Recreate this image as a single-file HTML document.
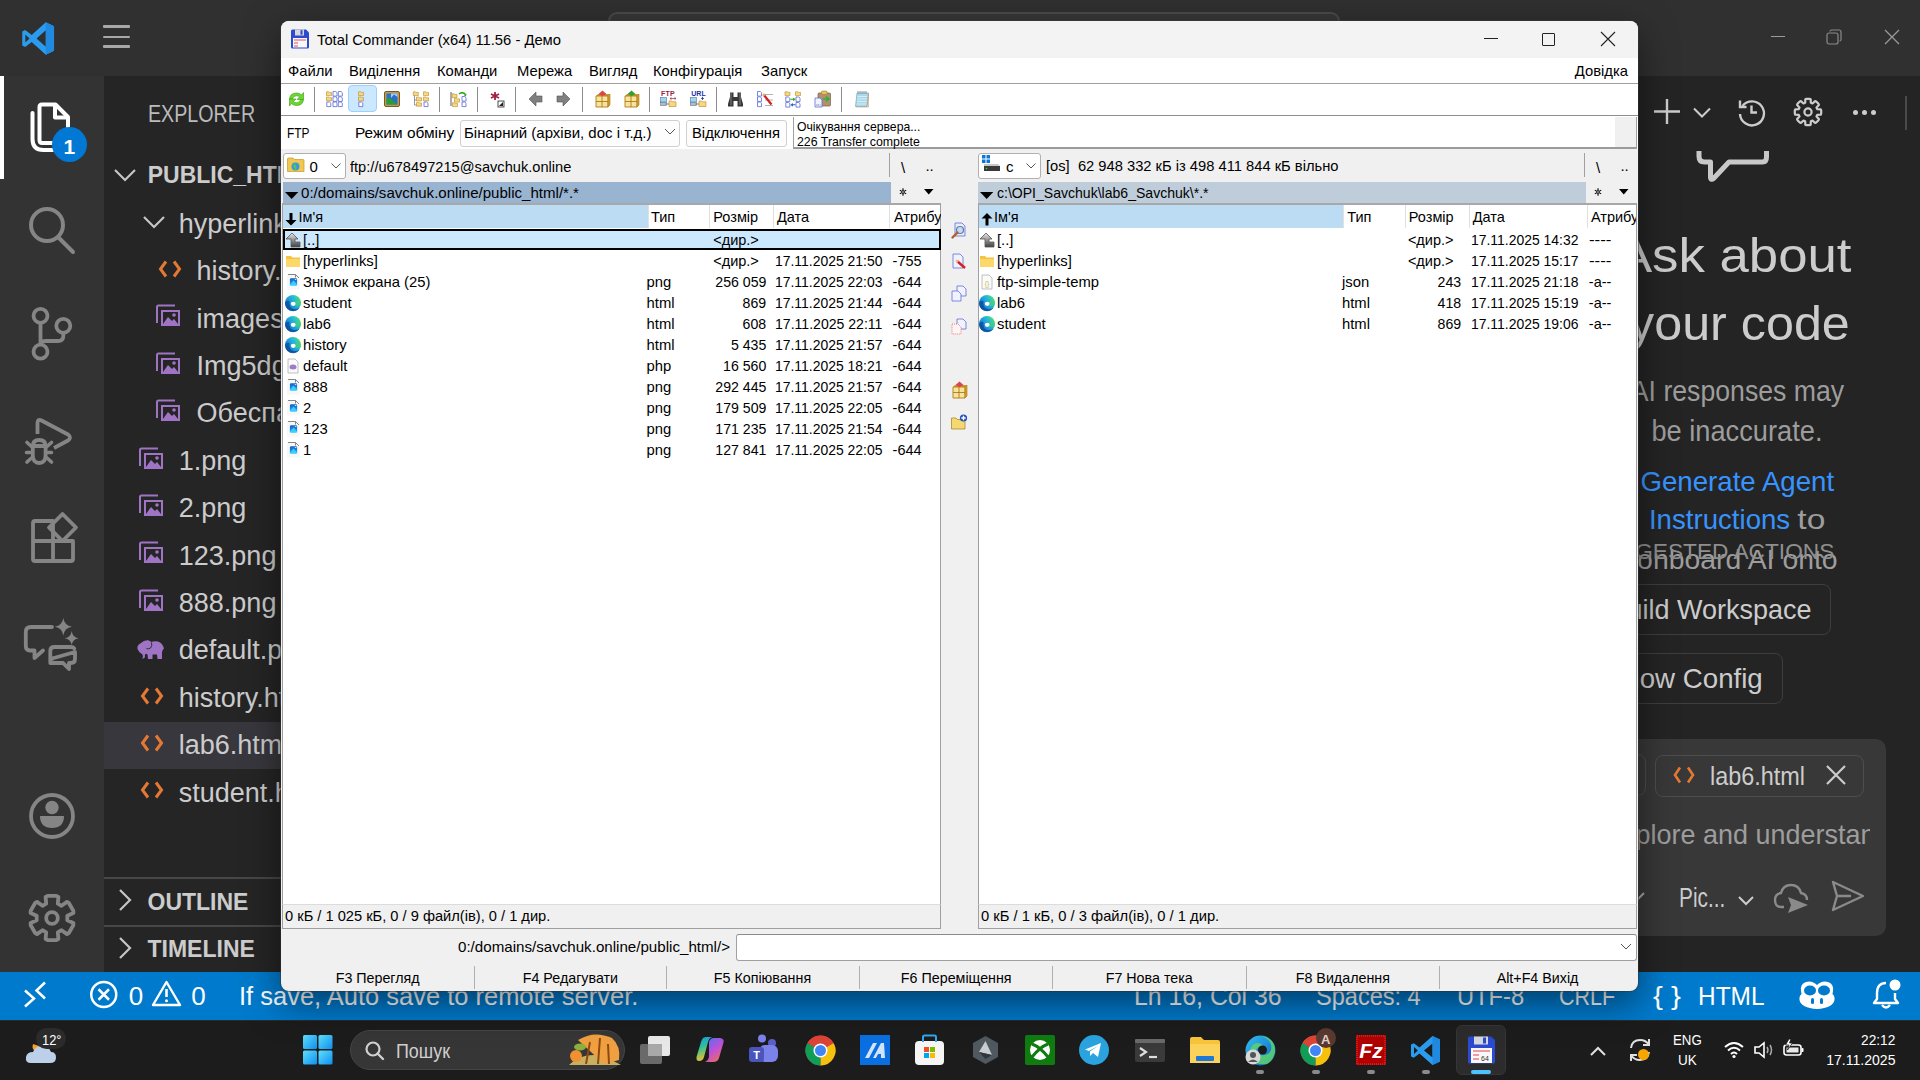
<!DOCTYPE html>
<html><head><meta charset="utf-8">
<style>
*{margin:0;padding:0;box-sizing:border-box}
html,body{width:1920px;height:1080px;overflow:hidden;background:#252526;font-family:"Liberation Sans",sans-serif}
.a{position:absolute}
.t{position:absolute;white-space:pre;line-height:1}
svg{position:absolute;overflow:visible}
</style></head><body>

<div class="a" style="left:0px;top:0px;width:1920px;height:76px;background:#303030;"></div>
<div class="a" style="left:0px;top:76px;width:104px;height:896px;background:#333333;"></div>
<div class="a" style="left:104px;top:76px;width:1536px;height:896px;background:#252526;"></div>
<div class="a" style="left:1637px;top:76px;width:283px;height:896px;background:#242424;"></div>
<svg style="left:20px;top:21px;" width="36" height="35" viewBox="0 0 35 36"><path d="M25.5 1.2 L34 5.3 V30.7 L25.5 34.8 L11 21.6 L4.3 26.7 L1.3 25.2 V10.8 L4.3 9.3 L11 14.4 Z M25.5 9.6 L16 18 L25.5 26.4 Z M4.5 13.8 V22.2 L8.8 18 Z" fill="#2a9cf0"/><path d="M25.5 1.2 L34 5.3 V30.7 L25.5 34.8 Z" fill="#1f8ae0"/></svg>
<div class="a" style="left:103px;top:25px;width:27px;height:2.6px;background:#a8a8a8;border-radius:1px"></div>
<div class="a" style="left:103px;top:35.5px;width:27px;height:2.6px;background:#a8a8a8;border-radius:1px"></div>
<div class="a" style="left:103px;top:45px;width:27px;height:2.6px;background:#a8a8a8;border-radius:1px"></div>
<div class="a" style="left:608px;top:12px;width:732px;height:40px;background:#373737;border:2px solid #4a4a4a;border-radius:9px"></div>
<div class="a" style="left:1771px;top:36px;width:14px;height:1px;background:#9a9a9a;"></div>
<svg style="left:1826px;top:29px;" width="16" height="16" viewBox="0 0 16 16"><rect x="1" y="4" width="11" height="11" rx="2" fill="none" stroke="#8a8a8a" stroke-width="1.2"/><path d="M4 2.5 Q4 1 5.5 1 H13 Q15 1 15 3 V10.5 Q15 12 13.5 12" fill="none" stroke="#8a8a8a" stroke-width="1.2"/></svg>
<svg style="left:1884px;top:29px;" width="16" height="16" viewBox="0 0 16 16"><path d="M1 1 L15 15 M15 1 L1 15" stroke="#9a9a9a" stroke-width="1.3"/></svg>
<div class="a" style="left:0px;top:76px;width:4px;height:103px;background:#ffffff;"></div>
<svg style="left:0px;top:76px;" width="104" height="100" viewBox="0 0 104 100"><path d="M39.5 31 Q39.5 28.5 42 28.5 H55.5 L68 41 V64 Q68 67 65 67 H42 Q39.5 67 39.5 64 Z" fill="none" stroke="#fff" stroke-width="4" stroke-linejoin="round"/><path d="M55 29.5 V41.5 H67" fill="none" stroke="#fff" stroke-width="4" stroke-linejoin="round"/><path d="M32.5 37 V63 Q32.5 74 43.5 74 H53" fill="none" stroke="#fff" stroke-width="4" stroke-linecap="round"/></svg>
<div class="a" style="left:52px;top:127px;width:35px;height:35px;border-radius:50%;background:#0078d4"></div>
<div class="t" style="left:63.50px;top:136.22px;font-size:21px;color:#fff;font-weight:700;">1</div>
<svg style="left:22px;top:200px;" width="60" height="60" viewBox="0 0 60 60"><circle cx="25" cy="25" r="16" fill="none" stroke="#858585" stroke-width="4"/><path d="M37 38 L51 52" stroke="#858585" stroke-width="4" stroke-linecap="round"/></svg>
<svg style="left:22px;top:300px;" width="60" height="60" viewBox="0 0 60 60"><circle cx="18.5" cy="15.8" r="7" fill="none" stroke="#858585" stroke-width="3.8"/><circle cx="41.3" cy="25.8" r="7" fill="none" stroke="#858585" stroke-width="3.8"/><circle cx="18.5" cy="51.7" r="7" fill="none" stroke="#858585" stroke-width="3.8"/><path d="M18.5 23 V44.5 M41.3 33 V36 Q41.3 41 36 41 H24 Q19 41 18.5 45" fill="none" stroke="#858585" stroke-width="3.8"/></svg>
<svg style="left:20px;top:410px;" width="60" height="60" viewBox="0 0 60 60"><path d="M17.5 24 V13 Q17.5 8.5 21.5 10.5 L48 24.5 Q52 27.5 48 30.5 L34 38" fill="none" stroke="#858585" stroke-width="3.8" stroke-linecap="butt" stroke-linejoin="round"/><path d="M12.8 36 Q12.8 30 19.2 30 Q25.6 30 25.6 36" fill="none" stroke="#858585" stroke-width="3.8"/><path d="M12.8 36 H25.6 V45 Q25.6 53 19.2 53 Q12.8 53 12.8 45 Z" fill="none" stroke="#858585" stroke-width="3.8"/><path d="M7 32.5 L11.5 36.5 M31.5 32.5 L27 36.5 M6.5 42.5 H11 M27.5 42.5 H31.5 M7 52 L11.5 48 M31.5 52 L27 48" fill="none" stroke="#858585" stroke-width="3.6" stroke-linecap="round"/></svg>
<svg style="left:22px;top:510px;" width="60" height="60" viewBox="0 0 60 60"><path d="M11 13 Q11 11 13 11 H31 V31 H51 V49 Q51 51 49 51 H13 Q11 51 11 49 Z M11 31 H31 V51" fill="none" stroke="#858585" stroke-width="3.8" stroke-linejoin="round"/><path d="M40.5 4 L54 17.5 L40.5 31 L27 17.5 Z" fill="none" stroke="#858585" stroke-width="3.8" stroke-linejoin="round"/></svg>
<svg style="left:10px;top:600px;" width="80" height="80" viewBox="0 0 80 80"><path d="M42 27 H21 Q15.8 27 15.8 32 V46 Q15.8 50 19.5 50.5 H24.5 V58 L33 50.5" fill="none" stroke="#858585" stroke-width="3.8" stroke-linejoin="round" stroke-linecap="round"/><path d="M40.3 63 V51 Q40.3 47 44.3 47 H60.5 Q63.3 47 64.3 48.5 M65 52 V59 Q65 63 61 63 H59 V69 L53 63 H44.3 Q40.3 63 40.3 59 Z" fill="none" stroke="#858585" stroke-width="3.8" stroke-linejoin="round" stroke-linecap="round"/><path d="M53.3 18 Q54.3 25.5 62 26.7 Q54.3 28 53.3 35.5 Q52.3 28 44.8 26.7 Q52.3 25.5 53.3 18 Z M61.7 31 Q62.5 37.3 68.7 38.3 Q62.5 39.3 61.7 45.5 Q60.9 39.3 54.7 38.3 Q60.9 37.3 61.7 31 Z" fill="#858585"/></svg>
<svg style="left:22px;top:786px;" width="60" height="60" viewBox="0 0 60 60"><circle cx="30" cy="30" r="21" fill="none" stroke="#858585" stroke-width="3.8"/><circle cx="30" cy="21.5" r="6.7" fill="#858585"/><path d="M18 30 H42 Q42 42 30 42 Q18 42 18 30 Z" fill="#858585"/></svg>
<svg style="left:22px;top:888px;" width="60" height="60" viewBox="0 0 60 60"><path d="M23.6 9.0 L25.7 7.9 L34.3 7.9 L36.4 9.0 L35.8 15.6 L39.5 17.8 L45.0 13.9 L47.0 15.2 L51.3 22.7 L51.4 25.1 L45.3 27.8 L45.3 32.2 L51.4 34.9 L51.3 37.3 L47.0 44.8 L45.0 46.1 L39.5 42.2 L35.8 44.4 L36.4 51.0 L34.3 52.1 L25.7 52.1 L23.6 51.0 L24.2 44.4 L20.5 42.2 L15.0 46.1 L13.0 44.8 L8.7 37.3 L8.6 34.9 L14.7 32.2 L14.7 27.8 L8.6 25.1 L8.7 22.7 L13.0 15.2 L15.0 13.9 L20.5 17.8 L24.2 15.6 Z" fill="none" stroke="#858585" stroke-width="3.8" stroke-linejoin="round"/><circle cx="30" cy="30" r="5.8" fill="none" stroke="#858585" stroke-width="3.8"/></svg>
<div class="t" style="left:148.00px;top:102.84px;font-size:23.7px;color:#bbbbbb;transform:scaleX(0.8305);transform-origin:0 50%;">EXPLORER</div>
<svg style="left:112px;top:166px;" width="28" height="18" viewBox="0 0 28 18"><path d="M3 4 L13 14 L23 4" fill="none" stroke="#c5c5c5" stroke-width="2.2"/></svg>
<div class="t" style="left:147.70px;top:164.23px;font-size:23px;color:#cccccc;font-weight:700;">PUBLIC_HTML</div>
<svg style="left:141px;top:213px;" width="28" height="18" viewBox="0 0 28 18"><path d="M3 4 L13 14 L23 4" fill="none" stroke="#c5c5c5" stroke-width="2.2"/></svg>
<div class="t" style="left:178.80px;top:210.74px;font-size:27px;color:#cccccc;">hyperlinks</div>
<div class="t" style="left:196.60px;top:258.14px;font-size:27px;color:#cccccc;">history.html</div>
<svg style="left:158px;top:259.0px;" width="24" height="20" viewBox="0 0 24 20"><path d="M8 2.5 L2.5 10 L8 17.5 M16 2.5 L21.5 10 L16 17.5" fill="none" stroke="#e37933" stroke-width="3"/></svg>
<div class="t" style="left:196.60px;top:305.54px;font-size:27px;color:#cccccc;">images.png</div>
<svg style="left:155px;top:304.4px;" width="27" height="24" viewBox="0 0 27 24"><path d="M2 19 V3 Q2 1.5 3.5 1.5 H20" fill="none" stroke="#a074c4" stroke-width="2"/><rect x="6" y="6" width="19" height="16" fill="#a074c4"/><rect x="8" y="8" width="15" height="12" fill="#252526"/><path d="M8 20 L13 13 L17 17 L19 15 L23 20 Z" fill="#a074c4"/><circle cx="19" cy="11" r="1.8" fill="#a074c4"/></svg>
<div class="t" style="left:196.60px;top:352.94px;font-size:27px;color:#cccccc;">Img5dgs.png</div>
<svg style="left:155px;top:351.79999999999995px;" width="27" height="24" viewBox="0 0 27 24"><path d="M2 19 V3 Q2 1.5 3.5 1.5 H20" fill="none" stroke="#a074c4" stroke-width="2"/><rect x="6" y="6" width="19" height="16" fill="#a074c4"/><rect x="8" y="8" width="15" height="12" fill="#252526"/><path d="M8 20 L13 13 L17 17 L19 15 L23 20 Z" fill="#a074c4"/><circle cx="19" cy="11" r="1.8" fill="#a074c4"/></svg>
<div class="t" style="left:196.60px;top:400.34px;font-size:27px;color:#cccccc;">Обеспалена.png</div>
<svg style="left:155px;top:399.2px;" width="27" height="24" viewBox="0 0 27 24"><path d="M2 19 V3 Q2 1.5 3.5 1.5 H20" fill="none" stroke="#a074c4" stroke-width="2"/><rect x="6" y="6" width="19" height="16" fill="#a074c4"/><rect x="8" y="8" width="15" height="12" fill="#252526"/><path d="M8 20 L13 13 L17 17 L19 15 L23 20 Z" fill="#a074c4"/><circle cx="19" cy="11" r="1.8" fill="#a074c4"/></svg>
<div class="t" style="left:178.80px;top:447.74px;font-size:27px;color:#cccccc;">1.png</div>
<svg style="left:138px;top:446.6px;" width="27" height="24" viewBox="0 0 27 24"><path d="M2 19 V3 Q2 1.5 3.5 1.5 H20" fill="none" stroke="#a074c4" stroke-width="2"/><rect x="6" y="6" width="19" height="16" fill="#a074c4"/><rect x="8" y="8" width="15" height="12" fill="#252526"/><path d="M8 20 L13 13 L17 17 L19 15 L23 20 Z" fill="#a074c4"/><circle cx="19" cy="11" r="1.8" fill="#a074c4"/></svg>
<div class="t" style="left:178.80px;top:495.14px;font-size:27px;color:#cccccc;">2.png</div>
<svg style="left:138px;top:494.0px;" width="27" height="24" viewBox="0 0 27 24"><path d="M2 19 V3 Q2 1.5 3.5 1.5 H20" fill="none" stroke="#a074c4" stroke-width="2"/><rect x="6" y="6" width="19" height="16" fill="#a074c4"/><rect x="8" y="8" width="15" height="12" fill="#252526"/><path d="M8 20 L13 13 L17 17 L19 15 L23 20 Z" fill="#a074c4"/><circle cx="19" cy="11" r="1.8" fill="#a074c4"/></svg>
<div class="t" style="left:178.80px;top:542.54px;font-size:27px;color:#cccccc;">123.png</div>
<svg style="left:138px;top:541.4px;" width="27" height="24" viewBox="0 0 27 24"><path d="M2 19 V3 Q2 1.5 3.5 1.5 H20" fill="none" stroke="#a074c4" stroke-width="2"/><rect x="6" y="6" width="19" height="16" fill="#a074c4"/><rect x="8" y="8" width="15" height="12" fill="#252526"/><path d="M8 20 L13 13 L17 17 L19 15 L23 20 Z" fill="#a074c4"/><circle cx="19" cy="11" r="1.8" fill="#a074c4"/></svg>
<div class="t" style="left:178.80px;top:589.94px;font-size:27px;color:#cccccc;">888.png</div>
<svg style="left:138px;top:588.8px;" width="27" height="24" viewBox="0 0 27 24"><path d="M2 19 V3 Q2 1.5 3.5 1.5 H20" fill="none" stroke="#a074c4" stroke-width="2"/><rect x="6" y="6" width="19" height="16" fill="#a074c4"/><rect x="8" y="8" width="15" height="12" fill="#252526"/><path d="M8 20 L13 13 L17 17 L19 15 L23 20 Z" fill="#a074c4"/><circle cx="19" cy="11" r="1.8" fill="#a074c4"/></svg>
<div class="t" style="left:178.80px;top:637.34px;font-size:27px;color:#cccccc;">default.php</div>
<svg style="left:137px;top:639.6999999999999px;" width="28" height="20" viewBox="0 0 28 20"><path d="M4 3 Q7 0 11 0.3 Q13.5 0.8 14 2 Q17 1 21 1.5 Q25.5 3 27 8.5 L26 9.5 Q25 11 25 13 V19 H20.5 L20 14.5 H15.5 V19 H11 L10.5 14.5 Q9 13.5 8.5 14 Q7.5 15 8 17 Q7 19 5 18.5 Q6.5 16.5 5.5 14.5 Q1.5 12 0.5 9 Q-0.3 5 4 3 Z" fill="#a074c4"/><path d="M14.5 2.5 Q15.5 6 13.5 8 Q11.5 9.5 9.5 8.5" fill="none" stroke="#252526" stroke-width="0.9"/></svg>
<div class="t" style="left:178.80px;top:684.74px;font-size:27px;color:#cccccc;">history.html</div>
<svg style="left:140px;top:685.6px;" width="24" height="20" viewBox="0 0 24 20"><path d="M8 2.5 L2.5 10 L8 17.5 M16 2.5 L21.5 10 L16 17.5" fill="none" stroke="#e37933" stroke-width="3"/></svg>
<div class="a" style="left:104px;top:722px;width:177px;height:47px;background:#37373d;"></div>
<div class="t" style="left:178.80px;top:732.14px;font-size:27px;color:#cccccc;">lab6.html</div>
<svg style="left:140px;top:733.0px;" width="24" height="20" viewBox="0 0 24 20"><path d="M8 2.5 L2.5 10 L8 17.5 M16 2.5 L21.5 10 L16 17.5" fill="none" stroke="#e37933" stroke-width="3"/></svg>
<div class="t" style="left:178.80px;top:779.54px;font-size:27px;color:#cccccc;">student.html</div>
<svg style="left:140px;top:780.4px;" width="24" height="20" viewBox="0 0 24 20"><path d="M8 2.5 L2.5 10 L8 17.5 M16 2.5 L21.5 10 L16 17.5" fill="none" stroke="#e37933" stroke-width="3"/></svg>
<div class="a" style="left:104px;top:877px;width:177px;height:2px;background:#474747;"></div>
<div class="a" style="left:104px;top:925px;width:177px;height:2px;background:#474747;"></div>
<svg style="left:116px;top:887px;" width="20" height="26" viewBox="0 0 20 26"><path d="M4 3 L14 13 L4 23" fill="none" stroke="#c5c5c5" stroke-width="2.2"/></svg>
<div class="t" style="left:147.50px;top:890.53px;font-size:23px;color:#cccccc;font-weight:700;">OUTLINE</div>
<svg style="left:116px;top:935px;" width="20" height="26" viewBox="0 0 20 26"><path d="M4 3 L14 13 L4 23" fill="none" stroke="#c5c5c5" stroke-width="2.2"/></svg>
<div class="t" style="left:147.50px;top:938.03px;font-size:23px;color:#cccccc;font-weight:700;">TIMELINE</div>
<svg style="left:1652px;top:97px;" width="30" height="30" viewBox="0 0 30 30"><path d="M15 2 V27 M2 14.5 H28" stroke="#cccccc" stroke-width="2.4"/></svg>
<svg style="left:1692px;top:106px;" width="20" height="14" viewBox="0 0 20 14"><path d="M2 2.5 L10 10.5 L18 2.5" fill="none" stroke="#cccccc" stroke-width="2"/></svg>
<svg style="left:1737px;top:97px;" width="30" height="31" viewBox="0 0 30 31"><path d="M5.5 9 A12 12 0 1 1 3 17" fill="none" stroke="#cccccc" stroke-width="2.4"/><path d="M3 3.5 V10 H9.5" fill="none" stroke="#cccccc" stroke-width="2.4"/><path d="M14.5 8.5 V15.5 H20" fill="none" stroke="#cccccc" stroke-width="2.4"/></svg>
<svg style="left:1794px;top:98px;" width="28" height="28" viewBox="0 0 28 28"><path d="M11.3 1.3 L12.4 0.8 L15.6 0.8 L16.7 1.3 L16.8 4.8 L18.5 5.5 L21.1 3.1 L22.2 3.5 L24.5 5.8 L24.9 6.9 L22.5 9.5 L23.2 11.2 L26.7 11.3 L27.2 12.4 L27.2 15.6 L26.7 16.7 L23.2 16.8 L22.5 18.5 L24.9 21.1 L24.5 22.2 L22.2 24.5 L21.1 24.9 L18.5 22.5 L16.8 23.2 L16.7 26.7 L15.6 27.2 L12.4 27.2 L11.3 26.7 L11.2 23.2 L9.5 22.5 L6.9 24.9 L5.8 24.5 L3.5 22.2 L3.1 21.1 L5.5 18.5 L4.8 16.8 L1.3 16.7 L0.8 15.6 L0.8 12.4 L1.3 11.3 L4.8 11.2 L5.5 9.5 L3.1 6.9 L3.5 5.8 L5.8 3.5 L6.9 3.1 L9.5 5.5 L11.2 4.8 Z" fill="none" stroke="#cccccc" stroke-width="2.2" stroke-linejoin="round"/><circle cx="14" cy="14" r="3.6" fill="none" stroke="#cccccc" stroke-width="2.2"/></svg>
<div class="a" style="left:1852.5px;top:110px;width:5px;height:5px;border-radius:50%;background:#cccccc"></div>
<div class="a" style="left:1861.5px;top:110px;width:5px;height:5px;border-radius:50%;background:#cccccc"></div>
<div class="a" style="left:1870.5px;top:110px;width:5px;height:5px;border-radius:50%;background:#cccccc"></div>
<div class="a" style="left:1905px;top:96px;width:2px;height:34px;background:#4a4a4a;"></div>
<svg style="left:1690px;top:148px;" width="82" height="38" viewBox="0 0 82 38"><path d="M9 3 V8.5 Q9 14 14.5 14 H20.5 V29 Q20.5 33 24 30 L39 14 H72.5 Q76.5 14 76.5 9 V3" fill="none" stroke="#c8c8c8" stroke-width="5" stroke-linejoin="round"/></svg>
<div class="t" style="right:69.00px;top:231.57px;font-size:48px;color:#cccccc;transform:scaleX(1.0989);transform-origin:100% 50%;">Ask about</div>
<div class="t" style="right:70.00px;top:300.37px;font-size:48px;color:#cccccc;transform:scaleX(1.0472);transform-origin:100% 50%;">your code</div>
<div class="t" style="right:76.00px;top:375.61px;font-size:30px;color:#9d9d9d;transform:scaleX(0.8883);transform-origin:100% 50%;">AI responses may</div>
<div class="t" style="right:98.00px;top:415.61px;font-size:30px;color:#9d9d9d;transform:scaleX(0.9074);transform-origin:100% 50%;">be inaccurate.</div>
<div class="t" style="right:86.25px;top:467.55px;font-size:28px;color:#3794ff;transform:scaleX(0.9877);transform-origin:100% 50%;">Generate Agent</div>
<div class="t" style="right:130.00px;top:506.30px;font-size:28px;color:#3794ff;transform:scaleX(0.9866);transform-origin:100% 50%;">Instructions</div>
<div class="t" style="right:95.00px;top:506.30px;font-size:28px;color:#9d9d9d;transform:scaleX(1.1991);transform-origin:100% 50%;">to</div>
<div class="t" style="right:82.00px;top:546.64px;font-size:27px;color:#9d9d9d;transform:scaleX(1.0519);transform-origin:100% 50%;">onboard AI onto</div>
<div class="t" style="right:85.50px;top:541.35px;font-size:22.5px;color:#8f8f8f;transform:scaleX(1.0079);transform-origin:100% 50%;">SUGGESTED ACTIONS</div>
<div class="a" style="left:1500px;top:584px;width:331px;height:51px;background:transparent;border:1px solid #3e3e3e;border-radius:8px"></div>
<div class="t" style="right:108.00px;top:596.30px;font-size:28px;color:#cccccc;transform:scaleX(0.9639);transform-origin:100% 50%;">Build Workspace</div>
<div class="a" style="left:1500px;top:653px;width:282.5px;height:51px;background:transparent;border:1px solid #3e3e3e;border-radius:8px"></div>
<div class="t" style="right:157.50px;top:665.05px;font-size:28px;color:#cccccc;transform:scaleX(0.9884);transform-origin:100% 50%;">Show Config</div>
<div class="a" style="left:1560px;top:739px;width:325.5px;height:197px;background:#383838;border-radius:10px"></div>
<div class="a" style="left:1500px;top:754px;width:145.5px;height:42px;background:transparent;border:1px solid #4e4e4e;border-radius:8px"></div>
<div class="a" style="left:1654.5px;top:754.5px;width:209.5px;height:42px;background:transparent;border:1.5px solid #4e4e4e;border-radius:8px"></div>
<svg style="left:1673px;top:765px;" width="22" height="20" viewBox="0 0 22 20"><path d="M7 2.5 L2 10 L7 17.5 M15 2.5 L20 10 L15 17.5" fill="none" stroke="#e37933" stroke-width="2.6"/></svg>
<div class="t" style="left:1709.50px;top:762.99px;font-size:26px;color:#cccccc;transform:scaleX(0.9005);transform-origin:0 50%;">lab6.html</div>
<svg style="left:1825px;top:764px;" width="22" height="22" viewBox="0 0 22 22"><path d="M2 2 L20 20 M20 2 L2 20" stroke="#cccccc" stroke-width="2.2"/></svg>
<div class="a" style="left:1500px;top:800px;width:370px;height:70px;overflow:hidden">
<div class="t" style="left:103.56px;top:21.30px;font-size:28px;color:#9d9d9d;transform:scaleX(0.9632);transform-origin:0 50%;">Explore and understand</div>
</div>
<div class="t" style="left:1678.75px;top:885.44px;font-size:27px;color:#cccccc;transform:scaleX(0.7707);transform-origin:0 50%;">Pic...</div>
<svg style="left:1630px;top:888px;" width="20" height="16" viewBox="0 0 20 16"><path d="M2 11 L8 5 L14 11" transform="rotate(180 8 8)" fill="none" stroke="#aaaaaa" stroke-width="2"/></svg>
<svg style="left:1737px;top:895px;" width="18" height="12" viewBox="0 0 18 12"><path d="M2 2 L9 9 L16 2" fill="none" stroke="#cccccc" stroke-width="2"/></svg>
<svg style="left:1774px;top:883px;" width="36" height="32" viewBox="0 0 36 32"><path d="M10 24 H7 Q1 24 1 17 Q1 11 7 10 Q9 2 17 2 Q25 2 27 10 Q33 11 33 17" fill="none" stroke="#8a8a8a" stroke-width="2.4"/><path d="M14 14 L34 22 L14 30 L17 22 Z" fill="#8a8a8a"/></svg>
<svg style="left:1831px;top:880px;" width="34" height="32" viewBox="0 0 34 32"><path d="M2 2 L32 16 L2 30 L6 16 Z M6 16 H20" fill="none" stroke="#8a8a8a" stroke-width="2.4" stroke-linejoin="round"/></svg>
<div class="a" style="left:0px;top:972px;width:1920px;height:48px;background:#007acc;"></div>
<svg style="left:24px;top:982px;" width="24" height="26" viewBox="0 0 24 26"><path d="M1 8.5 L10 16.5 L1 24.5 M21 0.5 L12.5 8.5 L21 16.5" fill="none" stroke="#ffffff" stroke-width="2.5"/></svg>
<svg style="left:89px;top:980px;" width="30" height="30" viewBox="0 0 30 30"><circle cx="14.75" cy="14.5" r="12.5" fill="none" stroke="#ffffff" stroke-width="2.5"/><path d="M9.5 9.25 L20 19.75 M20 9.25 L9.5 19.75" stroke="#ffffff" stroke-width="2.5"/></svg>
<div class="t" style="left:128.75px;top:982.99px;font-size:26px;color:#ffffff;">0</div>
<svg style="left:151px;top:979px;" width="32" height="28" viewBox="0 0 32 28"><path d="M15.5 3 L29 26 H2 Z" fill="none" stroke="#ffffff" stroke-width="2.4" stroke-linejoin="round"/><path d="M15.5 10 V18" stroke="#ffffff" stroke-width="2.6"/><circle cx="15.5" cy="21.8" r="1.5" fill="#ffffff"/></svg>
<div class="t" style="left:191.25px;top:982.99px;font-size:26px;color:#ffffff;">0</div>
<div class="t" style="left:239.40px;top:982.99px;font-size:26px;color:#ffffff;transform:scaleX(0.9798);transform-origin:0 50%;">If save, Auto save to remote server.</div>
<div class="t" style="left:1134.00px;top:982.99px;font-size:26px;color:#ffffff;transform:scaleX(0.9543);transform-origin:0 50%;">Ln 16, Col 36</div>
<div class="t" style="left:1315.80px;top:982.99px;font-size:26px;color:#ffffff;transform:scaleX(0.9055);transform-origin:0 50%;">Spaces: 4</div>
<div class="t" style="left:1456.80px;top:982.99px;font-size:26px;color:#ffffff;transform:scaleX(0.9123);transform-origin:0 50%;">UTF-8</div>
<div class="t" style="left:1559.00px;top:982.99px;font-size:26px;color:#ffffff;transform:scaleX(0.8248);transform-origin:0 50%;">CRLF</div>
<div class="t" style="left:1653.00px;top:982.99px;font-size:26px;color:#ffffff;transform:scaleX(1.1387);transform-origin:0 50%;">{ }</div>
<div class="t" style="left:1698.00px;top:982.99px;font-size:26px;color:#ffffff;transform:scaleX(0.9395);transform-origin:0 50%;">HTML</div>
<svg style="left:1798px;top:979px;" width="38" height="32" viewBox="0 0 38 32"><path d="M19 6 Q14 1 8 3 Q2 5 3 12 L3.5 15 Q1 17 1.5 21 Q3 29 19 30 Q35 29 36.5 21 Q37 17 34.5 15 L35 12 Q36 5 30 3 Q24 1 19 6 Z" fill="#fff"/><ellipse cx="12" cy="11.5" rx="6" ry="5" fill="#007acc"/><ellipse cx="26" cy="11.5" rx="6" ry="5" fill="#007acc"/><rect x="13" y="19" width="3" height="6" rx="1.5" fill="#007acc"/><rect x="22" y="19" width="3" height="6" rx="1.5" fill="#007acc"/></svg>
<svg style="left:1872px;top:978px;" width="30" height="32" viewBox="0 0 30 32"><path d="M14 5 Q5 5 5 15 V21 L2 25 H26 L23 21 V15" fill="none" stroke="#ffffff" stroke-width="2.4" stroke-linejoin="round"/><path d="M10 27 Q14 32 18 27" fill="none" stroke="#ffffff" stroke-width="2.4"/><circle cx="23" cy="7" r="5.5" fill="#ffffff"/></svg>
<div class="a" style="left:0px;top:1020px;width:1920px;height:60px;background:#1c1c1c;"></div>
<div class="a" style="left:0px;top:1020px;width:1920px;height:1px;background:#2a2a2a;"></div>
<svg style="left:25px;top:1030px;" width="40" height="36" viewBox="0 0 40 36"><path d="M8 14 Q6 20 12 22 L14 16 Z" fill="#f0a030"/><path d="M6 33 Q0 33 1 27 Q2 22 8 22 Q10 16 17 16 Q24 16 26 22 Q31 22 31 27.5 Q31 33 25 33 Z" fill="#bcd0ea"/></svg>
<div class="a" style="left:36px;top:1028px;width:30px;height:21px;background:#2b2b2b;border-radius:11px"></div>
<div class="t" style="left:41.50px;top:1032.30px;font-size:15px;color:#ffffff;transform:scaleX(0.8596);transform-origin:0 50%;">12°</div>
<svg style="left:303px;top:1035px;" width="30" height="30" viewBox="0 0 30 30"><defs><linearGradient id="wg" x1="0" y1="0" x2="1" y2="1"><stop offset="0" stop-color="#5ee0fb"/><stop offset="1" stop-color="#0f8ff0"/></linearGradient></defs><rect x="0" y="0" width="14" height="14" rx="1.5" fill="url(#wg)"/><rect x="15.5" y="0" width="14" height="14" rx="1.5" fill="url(#wg)"/><rect x="0" y="15.5" width="14" height="14" rx="1.5" fill="url(#wg)"/><rect x="15.5" y="15.5" width="14" height="14" rx="1.5" fill="url(#wg)"/></svg>
<div class="a" style="left:350px;top:1030px;width:275px;height:40px;background:#363636;border:1px solid #454545;border-radius:20px"></div>
<svg style="left:364px;top:1040px;" width="22" height="22" viewBox="0 0 22 22"><circle cx="9" cy="9" r="6.5" fill="none" stroke="#d0d0d0" stroke-width="2.2"/><path d="M13.5 13.5 L19 19" stroke="#d0d0d0" stroke-width="2.4" stroke-linecap="round"/></svg>
<div class="t" style="left:396.00px;top:1039.72px;font-size:21px;color:#cfcfcf;transform:scaleX(0.8530);transform-origin:0 50%;">Пошук</div>
<svg style="left:564px;top:1034px;" width="57" height="33" viewBox="0 0 57 33"><path d="M5 31 Q18 18 40 22 L57 31 Z" fill="#c8b060"/><path d="M14 6 Q30 -4 48 4 Q57 12 55 26 L40 30 Z" fill="#f0a040"/><path d="M22 30 L26 8 M34 30 L36 4 M45 30 L44 10" stroke="#8a4a10" stroke-width="2"/><circle cx="12" cy="22" r="6" fill="#f09030"/><ellipse cx="16" cy="13" rx="6" ry="3.5" fill="#8ab040"/></svg>
<svg style="left:640px;top:1036px;" width="30" height="28" viewBox="0 0 30 28"><rect x="0" y="8" width="22" height="20" rx="2" fill="#6a6a6a"/><rect x="8" y="0" width="22" height="20" rx="2" fill="#e8e8e8"/><rect x="8" y="8" width="14" height="12" fill="#a8a8a8"/></svg>
<svg style="left:696px;top:1036px;" width="29" height="27" viewBox="0 0 29 27"><defs><linearGradient id="cpa" x1="0" y1="0" x2="0.3" y2="1"><stop offset="0" stop-color="#2a8ff0"/><stop offset="0.45" stop-color="#26c0a0"/><stop offset="1" stop-color="#f0c030"/></linearGradient><linearGradient id="cpb" x1="0.2" y1="0" x2="0.8" y2="1"><stop offset="0" stop-color="#5a6ff0"/><stop offset="0.5" stop-color="#c050d8"/><stop offset="1" stop-color="#f07050"/></linearGradient></defs><path d="M7 2 Q9 0.5 12 1 H16 Q13 2 12 6 L8 21 Q7 25 3 25 Q0 25 0.5 21 L5 6 Q6 3 7 2 Z" fill="url(#cpa)"/><path d="M13 6 Q14 2 18 2 H24 Q28.5 2.5 27.5 6.5 L23 22 Q22 26 17 26 H9 Q12 25 13 21 Z" fill="url(#cpb)"/></svg>
<svg style="left:749px;top:1034px;" width="30" height="30" viewBox="0 0 30 30"><circle cx="13" cy="4.5" r="4" fill="#7b83eb"/><circle cx="23" cy="9" r="4" fill="#5b5fc7"/><rect x="10" y="11" width="19" height="17" rx="6" fill="#7b83eb"/><rect x="0" y="13" width="15" height="15" rx="3" fill="#4b53bc"/><text x="7.5" y="25" font-size="11" font-family="Liberation Sans" font-weight="700" fill="#fff" text-anchor="middle">T</text></svg>
<svg style="left:804.5px;top:1035px;" width="31" height="31" viewBox="0 0 31 31"><circle cx="15.5" cy="15.5" r="15" fill="#db4437"/><path d="M15.5 15.5 L28.5 8 A15 15 0 0 1 15.5 30.5 Z" fill="#f4c20d"/><path d="M15.5 15.5 L15.5 30.5 A15 15 0 0 1 2.5 8 Z" fill="#0f9d58"/><path d="M2.5 8 A15 15 0 0 1 28.5 8 L15.5 15.5 Z" fill="#db4437"/><circle cx="15.5" cy="15.5" r="7" fill="#fff"/><circle cx="15.5" cy="15.5" r="5.5" fill="#4285f4"/></svg>
<svg style="left:860px;top:1035px;" width="30" height="30" viewBox="0 0 30 30"><rect width="30" height="30" fill="#0a6fe0"/><path d="M5 23 L13 8 H17 L9 23 Z M13 23 L21 8 H24 L25 23 H21 L21 19 H18 L16 23 Z" fill="#e8f0ff" opacity="0.9"/></svg>
<svg style="left:915px;top:1035px;" width="30" height="30" viewBox="0 0 30 30"><rect x="0" y="6" width="29" height="24" rx="4" fill="#f5f5f5"/><path d="M8 7 V2 Q8 0.5 9.5 0.5 H19.5 Q21 0.5 21 2 V7" fill="none" stroke="#30a8f0" stroke-width="2"/><rect x="9" y="12" width="5" height="5" fill="#f25022"/><rect x="15" y="12" width="5" height="5" fill="#7fba00"/><rect x="9" y="18" width="5" height="5" fill="#00a4ef"/><rect x="15" y="18" width="5" height="5" fill="#ffb900"/></svg>
<svg style="left:972px;top:1036px;" width="27" height="28" viewBox="0 0 27 28"><path d="M13.5 0 L26 7 V21 L13.5 28 L1 21 V7 Z" fill="#505860"/><path d="M13.5 5 L20 19 L7 16 Z" fill="#c8cdd2"/><path d="M7 16 L20 19 L13.5 23 Z" fill="#30363c"/></svg>
<svg style="left:1025px;top:1035px;" width="30" height="30" viewBox="0 0 30 30"><rect width="30" height="30" rx="2" fill="#107c10"/><circle cx="15" cy="15" r="10" fill="#fff"/><path d="M7 9 Q15 12 23 22 M23 9 Q15 12 7 22" stroke="#107c10" stroke-width="3" fill="none"/></svg>
<svg style="left:1079px;top:1035px;" width="30" height="30" viewBox="0 0 30 30"><circle cx="15" cy="15" r="15" fill="#2aa3df"/><path d="M6 14.5 L22 8 L19 22 L14 18 L11 21 L11 16.5 L19 11 L10 16 Z" fill="#fff"/></svg>
<svg style="left:1135px;top:1039px;" width="30" height="23" viewBox="0 0 30 23"><rect width="30" height="23" rx="2" fill="#3a3a3a"/><rect width="30" height="4" rx="1" fill="#6a6a6a"/><path d="M5 9 L11 13 L5 17" fill="none" stroke="#ddd" stroke-width="2.2"/><path d="M14 18 H22" stroke="#ddd" stroke-width="2.2"/></svg>
<svg style="left:1190px;top:1036px;" width="30" height="28" viewBox="0 0 30 28"><path d="M0 3 Q0 1 2 1 H11 L14 4 H28 Q30 4 30 6 V27 H0 Z" fill="#f8c43a"/><rect x="0" y="8" width="30" height="19" fill="#fbd25a"/><rect x="6" y="20" width="18" height="5" rx="1" fill="#1e78d8"/></svg>
<svg style="left:1245px;top:1035px;" width="31" height="31" viewBox="0 0 31 31"><defs><linearGradient id="eg" x1="0" y1="0" x2="1" y2="1"><stop offset="0" stop-color="#36c0f0"/><stop offset="0.6" stop-color="#1a86d8"/><stop offset="1" stop-color="#0b5cad"/></linearGradient></defs><circle cx="15.5" cy="15.5" r="15" fill="url(#eg)"/><path d="M30 17 Q31 4 17 1 Q28 6 26 15 Q24 21 16 20 Q10 19 11 15 Q13 10 19 12 Q15 6 9 9 Q3 14 6 22 Q11 31 22 29 Q28 26 30 17 Z" fill="#5ed36a" opacity="0.85"/><circle cx="17.5" cy="15" r="4.5" fill="#1c1c1c"/></svg>
<svg style="left:1245px;top:1049px;" width="16" height="16" viewBox="0 0 16 16"><circle cx="8" cy="8" r="7.5" fill="#d8d8d8"/><circle cx="8" cy="6" r="3" fill="#555"/><path d="M3 13 Q8 8 13 13" fill="#555"/></svg>
<svg style="left:1300px;top:1035px;" width="31" height="31" viewBox="0 0 31 31"><circle cx="15.5" cy="15.5" r="15" fill="#db4437"/><path d="M15.5 15.5 L28.5 8 A15 15 0 0 1 15.5 30.5 Z" fill="#f4c20d"/><path d="M15.5 15.5 L15.5 30.5 A15 15 0 0 1 2.5 8 Z" fill="#0f9d58"/><path d="M2.5 8 A15 15 0 0 1 28.5 8 L15.5 15.5 Z" fill="#db4437"/><circle cx="15.5" cy="15.5" r="7" fill="#fff"/><circle cx="15.5" cy="15.5" r="5.5" fill="#4285f4"/></svg>
<div class="a" style="left:1316px;top:1028px;width:20px;height:20px;border-radius:50%;background:#5a3a30"></div>
<div class="t" style="left:1321.00px;top:1033.00px;font-size:13px;color:#e0d0c8;font-weight:700;">A</div>
<svg style="left:1356px;top:1035px;" width="30" height="30" viewBox="0 0 30 30"><rect width="30" height="30" fill="#bf0000"/><rect x="1" y="1" width="28" height="28" fill="#b00000" stroke="#e04040" stroke-dasharray="1 1" stroke-width="1"/><text x="15" y="23" font-size="21" font-family="Liberation Sans" font-weight="700" font-style="italic" fill="#fff" text-anchor="middle">Fz</text></svg>
<svg style="left:1410px;top:1035px;" width="31" height="31" viewBox="0 0 31 31"><path d="M22.5 1 L30 4.6 V26.4 L22.5 30 L9.5 18.5 L3.8 22.8 L1 21.5 V9.5 L3.8 8.2 L9.5 12.5 Z M22.5 8.5 L14 15.5 L22.5 22.5 Z M4 12 V19 L7.8 15.5 Z" fill="#2a9cf0"/><path d="M22.5 1 L30 4.6 V26.4 L22.5 30 Z" fill="#1f8ae0"/></svg>
<div class="a" style="left:1456px;top:1025px;width:50px;height:50px;background:#2c2c2c;border-radius:6px;border:1px solid #363636"></div>
<svg style="left:1467px;top:1036px;" width="29" height="28" viewBox="0 0 29 28"><path d="M1 2 Q1 0.5 2.5 0.5 H24 L28 4 V26 Q28 27.5 26.5 27.5 H2.5 Q1 27.5 1 26 Z" fill="#2b4bd0"/><rect x="7" y="0.5" width="14" height="8" fill="#d8d8d8"/><rect x="16" y="1.5" width="3" height="6" fill="#2b4bd0"/><rect x="4" y="12" width="21" height="15" fill="#f8f8f8"/><path d="M6 15 H23 M6 19 H12 M6 23 H12" stroke="#e04050" stroke-width="1.2"/><text x="18" y="25" font-size="7" font-family="Liberation Sans" fill="#333" text-anchor="middle">64</text></svg>
<div class="a" style="left:1256px;top:1070px;width:8px;height:4px;background:#8a8a8a;border-radius:2px"></div>
<div class="a" style="left:1312px;top:1070px;width:8px;height:4px;background:#8a8a8a;border-radius:2px"></div>
<div class="a" style="left:1367px;top:1070px;width:8px;height:4px;background:#8a8a8a;border-radius:2px"></div>
<div class="a" style="left:1422px;top:1070px;width:8px;height:4px;background:#8a8a8a;border-radius:2px"></div>
<div class="a" style="left:1471px;top:1070px;width:20px;height:4px;background:#4cc2ff;border-radius:2px"></div>
<svg style="left:1589px;top:1045px;" width="18" height="12" viewBox="0 0 18 12"><path d="M2 10 L9 3 L16 10" fill="none" stroke="#e0e0e0" stroke-width="2"/></svg>
<svg style="left:1626px;top:1036px;" width="28" height="28" viewBox="0 0 28 28"><path d="M5 12 Q6 4 14 4 Q20 4 23 9 M23 16 Q22 24 14 24 Q8 24 5 19" fill="none" stroke="#e0e0e0" stroke-width="2"/><path d="M23 3 V9 H17 M5 25 V19 H11" fill="none" stroke="#e0e0e0" stroke-width="2"/></svg>
<div class="a" style="left:1638px;top:1049px;width:11px;height:11px;border-radius:50%;background:#f7a600"></div>
<div class="t" style="left:1672.50px;top:1033.48px;font-size:14.5px;color:#ffffff;transform:scaleX(0.9150);transform-origin:0 50%;">ENG</div>
<div class="t" style="left:1677.50px;top:1053.23px;font-size:14.5px;color:#ffffff;transform:scaleX(0.9308);transform-origin:0 50%;">UK</div>
<svg style="left:1723px;top:1040px;" width="22" height="18" viewBox="0 0 22 18"><path d="M2 7 Q11 -1 20 7 M5 10.5 Q11 5 17 10.5 M8 14 Q11 11 14 14" fill="none" stroke="#ffffff" stroke-width="2"/><circle cx="11" cy="16.5" r="1.6" fill="#fff"/></svg>
<svg style="left:1753px;top:1040px;" width="22" height="20" viewBox="0 0 22 20"><path d="M2 7 H6 L11 3 V17 L6 13 H2 Z" fill="none" stroke="#ffffff" stroke-width="1.6"/><path d="M14 7 Q16 10 14 13 M17 5 Q20 10 17 15" fill="none" stroke="#aaaaaa" stroke-width="1.5"/></svg>
<svg style="left:1783px;top:1038px;" width="22" height="22" viewBox="0 0 22 22"><rect x="1" y="7" width="17" height="10" rx="2.5" fill="none" stroke="#fff" stroke-width="1.6"/><rect x="18.5" y="10" width="2" height="4" rx="0.8" fill="#fff"/><rect x="3.5" y="9.5" width="12" height="5" fill="#e8e8e8"/><path d="M6 1 L2.5 7 H6 L4.5 12 L9.5 5 H6.5 L8 1 Z" fill="#fff" stroke="#1c1c1c" stroke-width="0.8"/></svg>
<div class="t" style="right:25.00px;top:1033.48px;font-size:14.5px;color:#ffffff;transform:scaleX(0.9439);transform-origin:100% 50%;">22:12</div>
<div class="t" style="right:25.00px;top:1053.23px;font-size:14.5px;color:#ffffff;transform:scaleX(0.9686);transform-origin:100% 50%;">17.11.2025</div>
<div class="a" style="left:281px;top:21px;width:1357px;height:970px;background:#f0f0f0;border-radius:8px;box-shadow:0 12px 36px rgba(0,0,0,0.5),0 0 0 1px rgba(70,70,70,0.5);overflow:hidden">
</div>
<div class="a" style="left:281px;top:21px;width:1357px;height:37px;background:#f3f3f3;border-radius:8px 8px 0 0"></div>
<svg style="left:290px;top:29px;" width="20" height="20" viewBox="0 0 20 20"><path d="M1 2 Q1 0.5 2.5 0.5 H16 L19 3.5 V18 Q19 19.5 17.5 19.5 H2.5 Q1 19.5 1 18 Z" fill="#2b4bd0"/><rect x="5" y="0.5" width="9" height="6" fill="#d8d8d8"/><rect x="10.5" y="1.2" width="2" height="4.5" fill="#2b4bd0"/><rect x="3" y="9" width="14" height="9.5" fill="#f8f8f8"/><path d="M4 11 H16 M4 14 H8 M4 17 H8" stroke="#e04050" stroke-width="0.9"/></svg>
<div class="t" style="left:317.00px;top:31.70px;font-size:15px;color:#000;transform:scaleX(0.9846);transform-origin:0 50%;">Total Commander (x64) 11.56 - Демо</div>
<div class="a" style="left:1484px;top:38px;width:14px;height:1px;background:#222;"></div>
<div class="a" style="left:1542px;top:33px;width:13px;height:13px;background:transparent;border:1px solid #222;border-radius:1px"></div>
<svg style="left:1600px;top:31px;" width="16" height="16" viewBox="0 0 16 16"><path d="M1 1 L15 15 M15 1 L1 15" stroke="#222" stroke-width="1.1"/></svg>
<div class="a" style="left:281px;top:58px;width:1357px;height:25px;background:#ffffff;"></div>
<div class="t" style="left:287.80px;top:62.90px;font-size:15px;color:#000;transform:scaleX(0.9858);transform-origin:0 50%;">Файли</div>
<div class="t" style="left:349.40px;top:62.90px;font-size:15px;color:#000;transform:scaleX(0.9858);transform-origin:0 50%;">Виділення</div>
<div class="t" style="left:437.20px;top:62.90px;font-size:15px;color:#000;transform:scaleX(0.9858);transform-origin:0 50%;">Команди</div>
<div class="t" style="left:516.60px;top:62.90px;font-size:15px;color:#000;transform:scaleX(0.9858);transform-origin:0 50%;">Мережа</div>
<div class="t" style="left:589.40px;top:62.90px;font-size:15px;color:#000;transform:scaleX(0.9858);transform-origin:0 50%;">Вигляд</div>
<div class="t" style="left:653.40px;top:62.90px;font-size:15px;color:#000;transform:scaleX(0.9858);transform-origin:0 50%;">Конфігурація</div>
<div class="t" style="left:761.25px;top:62.90px;font-size:15px;color:#000;transform:scaleX(0.9858);transform-origin:0 50%;">Запуск</div>
<div class="t" style="right:291.70px;top:62.90px;font-size:15px;color:#000;transform:scaleX(0.9858);transform-origin:100% 50%;">Довідка</div>
<div class="a" style="left:281px;top:83px;width:1357px;height:1px;background:#a0a0a0;"></div>
<div class="a" style="left:281px;top:84px;width:1357px;height:31px;background:#ffffff;"></div>
<div class="a" style="left:281px;top:115px;width:1357px;height:2px;background:#8f8f8f;"></div>
<div class="a" style="left:348px;top:85px;width:29px;height:27px;background:#cce8ff;border:1px solid #99d1ff;border-radius:4px"></div>
<div class="a" style="left:314px;top:87px;width:1.2px;height:25px;background:#8c8c8c;"></div>
<div class="a" style="left:439px;top:87px;width:1.2px;height:25px;background:#8c8c8c;"></div>
<div class="a" style="left:477px;top:87px;width:1.2px;height:25px;background:#8c8c8c;"></div>
<div class="a" style="left:515px;top:87px;width:1.2px;height:25px;background:#8c8c8c;"></div>
<div class="a" style="left:582px;top:87px;width:1.2px;height:25px;background:#8c8c8c;"></div>
<div class="a" style="left:649px;top:87px;width:1.2px;height:25px;background:#8c8c8c;"></div>
<div class="a" style="left:716px;top:87px;width:1.2px;height:25px;background:#8c8c8c;"></div>
<div class="a" style="left:841px;top:87px;width:1.2px;height:25px;background:#8c8c8c;"></div>
<svg style="left:288px;top:91px;" width="17" height="16" viewBox="0 0 17 16"><path d="M1.5 8 Q2 2 8.5 2 Q11.5 2 13.5 4 L15.5 1.5 V8.5 H9 L11.5 6 Q10.5 4.8 8.5 4.8 Q5 4.8 4.5 8 Z" fill="#6ad830" stroke="#3a9a10" stroke-width="0.6"/><path d="M15.5 8.5 Q15 14.5 8.5 14.5 Q5.5 14.5 3.5 12.5 L1.5 15 V8 H8 L5.5 10.5 Q6.5 11.7 8.5 11.7 Q12 11.7 12.5 8.5 Z" fill="#6ad830" stroke="#3a9a10" stroke-width="0.6"/></svg>
<svg style="left:326px;top:91px;" width="17" height="16" viewBox="0 0 17 16"><path d="M0.5 0.8 H2.7 L3.3 1.4 H5.5 V4.6 H0.5 Z" fill="#f7d880" stroke="#b58a2a" stroke-width="0.6"/><path d="M0.5 6.1 H2.7 L3.3 6.699999999999999 H5.5 V9.899999999999999 H0.5 Z" fill="#f7d880" stroke="#b58a2a" stroke-width="0.6"/><path d="M0.8 11 H3.5999999999999996 L4.8 12.2 V15.6 H0.8 Z" fill="#fff" stroke="#5868d8" stroke-width="0.8"/><path d="M7 0.5 H9.8 L11 1.7 V5.1 H7 Z" fill="#fff" stroke="#5868d8" stroke-width="0.8"/><path d="M7 5.8 H9.8 L11 7.0 V10.399999999999999 H7 Z" fill="#fff" stroke="#5868d8" stroke-width="0.8"/><path d="M7 11 H9.8 L11 12.2 V15.6 H7 Z" fill="#fff" stroke="#5868d8" stroke-width="0.8"/><path d="M12.3 0.5 H15.100000000000001 L16.3 1.7 V5.1 H12.3 Z" fill="#fff" stroke="#5868d8" stroke-width="0.8"/><path d="M12.3 5.8 H15.100000000000001 L16.3 7.0 V10.399999999999999 H12.3 Z" fill="#fff" stroke="#5868d8" stroke-width="0.8"/><path d="M12.3 11 H15.100000000000001 L16.3 12.2 V15.6 H12.3 Z" fill="#fff" stroke="#5868d8" stroke-width="0.8"/></svg>
<svg style="left:358px;top:91px;" width="8" height="16" viewBox="0 0 8 16"><path d="M0.5 0.8 H2.7 L3.3 1.4 H5.5 V4.6 H0.5 Z" fill="#f7d880" stroke="#b58a2a" stroke-width="0.6"/><path d="M0.5 6.1 H2.7 L3.3 6.699999999999999 H5.5 V9.899999999999999 H0.5 Z" fill="#f7d880" stroke="#b58a2a" stroke-width="0.6"/><path d="M0.8 11 H3.5999999999999996 L4.8 12.2 V15.6 H0.8 Z" fill="#fff" stroke="#5868d8" stroke-width="0.8"/></svg>
<svg style="left:384px;top:91px;" width="16" height="16" viewBox="0 0 16 16"><rect x="0.5" y="0.5" width="15" height="15" rx="1.5" fill="#c09a50" stroke="#7a5a20"/><rect x="2.5" y="2.5" width="11" height="11" fill="#2a70c8"/><path d="M7 7 L10 3.5 L13.5 6 V2.5 H7 Z" fill="#e0f0ff" opacity="0.7"/><path d="M2.5 13.5 V8 Q6 6 9 10 L13.5 13.5 Z" fill="#28a030"/></svg>
<svg style="left:413px;top:91px;" width="17" height="16" viewBox="0 0 17 16"><path d="M1.5 4 V14 H4 M1.5 9 H4" fill="none" stroke="#555" stroke-width="0.6"/><path d="M0.3 0.8 H2.5 L3.0999999999999996 1.4 H5.3 V4.6 H0.3 Z" fill="#f7d880" stroke="#b58a2a" stroke-width="0.6"/><path d="M3.5 6.1 H5.7 L6.3 6.699999999999999 H8.5 V9.899999999999999 H3.5 Z" fill="#f7d880" stroke="#b58a2a" stroke-width="0.6"/><path d="M3.5 11.4 H5.7 L6.3 12.0 H8.5 V15.2 H3.5 Z" fill="#f7d880" stroke="#b58a2a" stroke-width="0.6"/><path d="M10.5 0.8 H12.7 L13.3 1.4 H15.5 V4.6 H10.5 Z" fill="#f7d880" stroke="#b58a2a" stroke-width="0.6"/><path d="M10.5 6.1 H12.7 L13.3 6.699999999999999 H15.5 V9.899999999999999 H10.5 Z" fill="#f7d880" stroke="#b58a2a" stroke-width="0.6"/><path d="M11 11 H13.8 L15 12.2 V15.6 H11 Z" fill="#fff" stroke="#5868d8" stroke-width="0.8"/></svg>
<svg style="left:450px;top:91px;" width="17" height="17" viewBox="0 0 17 17"><path d="M1 1 V15" stroke="#333" stroke-width="0.8"/><path d="M2 2.8 H4.2 L4.8 3.4 H7 V6.6 H2 Z" fill="#f7d880" stroke="#b58a2a" stroke-width="0.6"/><path d="M4.5 7.3 H6.7 L7.3 7.9 H9.5 V11.1 H4.5 Z" fill="#f7d880" stroke="#b58a2a" stroke-width="0.6"/><path d="M2.5 11.8 H4.7 L5.3 12.4 H7.5 V15.6 H2.5 Z" fill="#f7d880" stroke="#b58a2a" stroke-width="0.6"/><path d="M12 5.5 H14.8 L16 6.7 V10.1 H12 Z" fill="#fff" stroke="#5868d8" stroke-width="0.8"/><path d="M12 11 H14.8 L16 12.2 V15.6 H12 Z" fill="#fff" stroke="#5868d8" stroke-width="0.8"/><path d="M9 3 Q12.5 0 15.5 3.5" fill="none" stroke="#30a020" stroke-width="1.5"/><path d="M14 4.5 L16.5 2.5 L16 5.5 Z" fill="#30a020"/></svg>
<svg style="left:489px;top:91px;" width="16" height="16" viewBox="0 0 16 16"><path d="M6 1 V9 M2 3 L10 7 M10 3 L2 7" stroke="#a02040" stroke-width="1.8"/><rect x="9" y="10" width="6" height="6" fill="#fff" stroke="#222" stroke-width="0.8"/><path d="M10 15 L14 11 V15 Z" fill="#222"/></svg>
<svg style="left:528px;top:91px;" width="15" height="16" viewBox="0 0 15 16"><path d="M1 8 L8 1 V5 H14 V11 H8 V15 Z" fill="#808080" stroke="#505050" stroke-width="0.6"/></svg>
<svg style="left:556px;top:91px;" width="15" height="16" viewBox="0 0 15 16"><path d="M14 8 L7 1 V5 H1 V11 H7 V15 Z" fill="#808080" stroke="#505050" stroke-width="0.6"/></svg>
<svg style="left:594px;top:90px;" width="17" height="18" viewBox="0 0 17 18"><path d="M2 6 L4 4 H16 L14 6 Z" fill="#c89a30"/><path d="M2 6 H14 V17 H2 Z" fill="#f7e3a0" stroke="#b07a10" stroke-width="0.9"/><path d="M2 11.5 H14 M8 6 V17" stroke="#b07a10" stroke-width="0.9"/><path d="M14 6 L16 4 V15 L14 17 Z" fill="#d0a030" stroke="#b07a10" stroke-width="0.6"/><path d="M4.5 4 L8.5 0.5 L12.5 4 L8.5 6 Z" fill="#e04050"/></svg>
<svg style="left:623px;top:90px;" width="17" height="18" viewBox="0 0 17 18"><path d="M2 6 L4 4 H16 L14 6 Z" fill="#c89a30"/><path d="M2 6 H14 V17 H2 Z" fill="#f7e3a0" stroke="#b07a10" stroke-width="0.9"/><path d="M2 11.5 H14 M8 6 V17" stroke="#b07a10" stroke-width="0.9"/><path d="M14 6 L16 4 V15 L14 17 Z" fill="#d0a030" stroke="#b07a10" stroke-width="0.6"/><path d="M4.5 4 L8.5 0.5 L12.5 4 L8.5 6 Z" fill="#30a030"/></svg>
<svg style="left:660px;top:90px;" width="17" height="18" viewBox="0 0 17 18"><text x="8" y="6.2" font-size="7" font-family="Liberation Sans" font-weight="700" fill="#a02040" text-anchor="middle" letter-spacing="0.3">FTP</text><rect x="0.5" y="7.5" width="6" height="4.5" fill="#9ad8f0" stroke="#6070a0" stroke-width="0.6"/><rect x="0.5" y="12.5" width="6" height="3" fill="#b8b8c8" stroke="#6070a0" stroke-width="0.6"/><circle cx="5.5" cy="14" r="0.6" fill="#30e030"/><path d="M6.5 14 H9" stroke="#3050c0" stroke-width="0.8"/><path d="M9 11 H11.5 L12.3 11.8 H16 V16.5 H9 Z" fill="#f7d880" stroke="#b58a2a" stroke-width="0.6"/><path d="M10 8.5 H16 M10 8.5 L11.5 7.3 M10 8.5 L11.5 9.7 M16 8.5 L14.5 7.3 M16 8.5 L14.5 9.7" stroke="#a02040" stroke-width="0.7"/></svg>
<svg style="left:690px;top:90px;" width="17" height="18" viewBox="0 0 17 18"><text x="8.5" y="6.2" font-size="7" font-family="Liberation Sans" font-weight="700" fill="#1a30a0" text-anchor="middle">URL</text><rect x="0.5" y="7.5" width="6" height="4.5" fill="#9ad8f0" stroke="#6070a0" stroke-width="0.6"/><rect x="0.5" y="12.5" width="6" height="3" fill="#b8b8c8" stroke="#6070a0" stroke-width="0.6"/><circle cx="5.5" cy="14" r="0.6" fill="#30e030"/><path d="M6.5 14 H9" stroke="#3050c0" stroke-width="0.8"/><path d="M9 11 H11.5 L12.3 11.8 H16 V16.5 H9 Z" fill="#f7d880" stroke="#b58a2a" stroke-width="0.6"/><path d="M12.5 6.8 V10 M11 8.4 H14" stroke="#1a30a0" stroke-width="0.8"/></svg>
<svg style="left:727px;top:91px;" width="17" height="16" viewBox="0 0 17 16"><path d="M3 1.5 H6.5 V6 H10.5 V1.5 H14 V6 L16 13 V15.5 H10.5 V10 H6.5 V15.5 H1 V13 L3 6 Z" fill="#383838"/><path d="M4 2 V14 M13 2 V14" stroke="#808080" stroke-width="1"/></svg>
<svg style="left:757px;top:91px;" width="17" height="17" viewBox="0 0 17 17"><path d="M0.5 0.5 H3.3 L4.5 1.7 V5.1 H0.5 Z" fill="#fff" stroke="#5868d8" stroke-width="0.8"/><path d="M0.5 5.8 H3.3 L4.5 7.0 V10.399999999999999 H0.5 Z" fill="#fff" stroke="#5868d8" stroke-width="0.8"/><path d="M0.5 11 H3.3 L4.5 12.2 V15.6 H0.5 Z" fill="#fff" stroke="#5868d8" stroke-width="0.8"/><path d="M8 3.5 H16 M8 9 H16 M8 14.5 H16" stroke="#909090" stroke-width="0.7"/><path d="M6.5 3.5 L14.5 13.5" stroke="#d02020" stroke-width="2.2"/><path d="M6 3 L7.5 4.8" stroke="#f0b070" stroke-width="2.2"/></svg>
<svg style="left:785px;top:91px;" width="17" height="17" viewBox="0 0 17 17"><path d="M0 0.8 H2.2 L2.8 1.4 H5 V4.6 H0 Z" fill="#f7d880" stroke="#b58a2a" stroke-width="0.6"/><path d="M10.5 0.8 H12.7 L13.3 1.4 H15.5 V4.6 H10.5 Z" fill="#f7d880" stroke="#b58a2a" stroke-width="0.6"/><path d="M0.8 6 H3.5999999999999996 L4.8 7.2 V10.6 H0.8 Z" fill="#fff" stroke="#5868d8" stroke-width="0.8"/><path d="M11 6 H13.8 L15 7.2 V10.6 H11 Z" fill="#fff" stroke="#5868d8" stroke-width="0.8"/><path d="M0.8 11.5 H3.5999999999999996 L4.8 12.7 V16.1 H0.8 Z" fill="#fff" stroke="#5868d8" stroke-width="0.8"/><path d="M11 11.5 H13.8 L15 12.7 V16.1 H11 Z" fill="#fff" stroke="#5868d8" stroke-width="0.8"/><path d="M5.5 8.3 H9.5 L8.3 7 M9.5 8.3 L8.3 9.6" fill="none" stroke="#30a020" stroke-width="1.1"/><path d="M10.5 13.8 H6.5 L7.7 12.5 M6.5 13.8 L7.7 15.1" fill="none" stroke="#2060c0" stroke-width="1.1"/></svg>
<svg style="left:814px;top:90px;" width="18" height="18" viewBox="0 0 18 18"><rect x="4" y="3" width="12.5" height="13" rx="1" fill="#b09070" stroke="#806040" stroke-width="0.7"/><rect x="7.5" y="1" width="5.5" height="3.5" rx="1" fill="#e8c060" stroke="#a08020" stroke-width="0.6"/><path d="M1 8 H6 L8 10 V17 H1 Z" fill="#f0f2ff" stroke="#6070d0" stroke-width="0.8"/><path d="M2.5 15 H6.5" stroke="#333" stroke-width="0.9" stroke-dasharray="0.9 0.9"/><path d="M9 9 H14 M12 6.5 L15 9 L12 11.5" fill="none" stroke="#30b030" stroke-width="1.5"/></svg>
<svg style="left:853px;top:90px;" width="17" height="18" viewBox="0 0 17 18"><path d="M4 3 H15.5 L14 16.5 H2.5 Z" fill="#a8d8ec" stroke="#80a8b8" stroke-width="0.7"/><path d="M4.5 6.5 H14.5 M4.2 9 H14.2 M3.9 11.5 H13.9 M3.6 14 H13.6" stroke="#d8f0fa" stroke-width="0.9"/><path d="M5 1 V3.5 M7 1 V3.5 M9 1 V3.5 M11 1 V3.5 M13 1 V3.5" stroke="#555" stroke-width="0.6"/><path d="M14 16.5 L15.5 3 V17 H3" fill="none" stroke="#c0a070" stroke-width="0.6"/></svg>
<div class="a" style="left:281px;top:116px;width:1357px;height:33px;background:#ffffff;"></div>
<div class="t" style="left:286.50px;top:125.30px;font-size:15px;color:#000;transform:scaleX(0.7942);transform-origin:0 50%;">FTP</div>
<div class="t" style="left:354.50px;top:125.30px;font-size:15px;color:#000;transform:scaleX(1.0291);transform-origin:0 50%;">Режим обміну</div>
<div class="a" style="left:459.5px;top:119.5px;width:220px;height:27px;background:#fdfdfd;border:1px solid #d0d0d0;border-radius:3px"></div>
<div class="t" style="left:463.75px;top:125.30px;font-size:15px;color:#000;transform:scaleX(0.9999);transform-origin:0 50%;">Бінарний (архіви, doc і т.д.)</div>
<svg style="left:664px;top:128px;" width="12" height="8" viewBox="0 0 12 8"><path d="M1 1 L6 6 L11 1" fill="none" stroke="#555" stroke-width="1"/></svg>
<div class="a" style="left:685.5px;top:119.5px;width:101.5px;height:27px;background:#fdfdfd;border:1px solid #d0d0d0;border-radius:3px"></div>
<div class="t" style="left:692.00px;top:125.30px;font-size:15px;color:#000;transform:scaleX(0.9850);transform-origin:0 50%;">Відключення</div>
<div class="a" style="left:793px;top:117px;width:844px;height:32px;background:#ffffff;border-left:1px solid #a0a0a0;border-right:1px solid #a0a0a0;border-bottom:2px solid #9a9a9a"></div>
<div class="a" style="left:1615px;top:117px;width:21px;height:30px;background:#f0f0f0;"></div>
<div class="t" style="left:797.00px;top:120.00px;font-size:13px;color:#000;transform:scaleX(0.9395);transform-origin:0 50%;">Очікування сервера...</div>
<div class="t" style="left:797.00px;top:134.60px;font-size:13px;color:#000;transform:scaleX(0.9494);transform-origin:0 50%;">226 Transfer complete</div>
<div class="a" style="left:281px;top:149px;width:1357px;height:32px;background:#f0f0f0;"></div>
<div class="a" style="left:282.5px;top:152.5px;width:63px;height:26px;background:#ffffff;border:1px solid #b0b0b0;border-radius:3px"></div>
<svg style="left:286.5px;top:157px;" width="18" height="16" viewBox="0 0 18 16"><path d="M0.5 2 Q0.5 1 1.5 1 H6 L7.5 2.5 H16 Q17 2.5 17 3.5 V14.5 H0.5 Z" fill="#f0c850" stroke="#c09a30" stroke-width="0.7"/><circle cx="8.5" cy="9.5" r="4" fill="#3a9ad8"/><path d="M6 8 Q8 6 9 9 Q10 12 8 13" fill="#5ac840"/></svg>
<div class="t" style="left:309.50px;top:158.55px;font-size:15px;color:#000;">0</div>
<svg style="left:330.5px;top:163px;" width="10" height="6" viewBox="0 0 10 6"><path d="M0.5 0.5 L5 5 L9.5 0.5" fill="none" stroke="#444" stroke-width="0.9"/></svg>
<div class="t" style="left:350.00px;top:158.55px;font-size:15px;color:#000;transform:scaleX(0.9746);transform-origin:0 50%;">ftp://u678497215@savchuk.online</div>
<div class="a" style="left:889.4px;top:153px;width:1px;height:24px;background:#a0a0a0;"></div>
<div class="t" style="left:900.90px;top:159.80px;font-size:15px;color:#000;">\</div>
<div class="t" style="left:925.40px;top:158.10px;font-size:15px;color:#000;">..</div>
<svg style="left:899.4px;top:187.5px;" width="8" height="8" viewBox="0 0 8 8"><path d="M4 0.3 V7.7 M0.8 2.1 L7.2 5.9 M7.2 2.1 L0.8 5.9" stroke="#000" stroke-width="1.1"/><circle cx="4" cy="4" r="1.3" fill="#f0f0f0" stroke="#000" stroke-width="0.8"/></svg>
<svg style="left:923.9px;top:188.9px;" width="10" height="6" viewBox="0 0 10 6"><path d="M0 0 H9.5 L4.75 5.5 Z" fill="#000"/></svg>
<div class="a" style="left:283px;top:181.5px;width:608px;height:21.5px;background:#99b4d1;"></div>
<svg style="left:285.3px;top:191.6px;" width="14" height="8" viewBox="0 0 14 8"><path d="M0 0 H13.3 L6.65 7 Z" fill="#000"/></svg>
<div class="t" style="left:301.25px;top:185.10px;font-size:15px;color:#000;transform:scaleX(1.0042);transform-origin:0 50%;">0:/domains/savchuk.online/public_html/*.*</div>
<div class="a" style="left:282px;top:203px;width:659px;height:701px;background:#ffffff;border:1px solid #a0a0a0;border-top:2px solid #a8a8a8;border-bottom:0"></div>
<div class="a" style="left:283px;top:205px;width:365px;height:23px;background:#bcdcf4;"></div>
<div class="a" style="left:648px;top:205px;width:1px;height:23px;background:#e0e0e0;"></div>
<div class="a" style="left:709px;top:205px;width:1px;height:23px;background:#e0e0e0;"></div>
<div class="a" style="left:773px;top:205px;width:1px;height:23px;background:#e0e0e0;"></div>
<div class="a" style="left:889px;top:205px;width:1px;height:23px;background:#e0e0e0;"></div>
<svg style="left:285px;top:213px;" width="12" height="13" viewBox="0 0 12 13"><path d="M4.5 0 H7.5 V7 H11.5 L6 12.5 L0.5 7 H4.5 Z" fill="#000"/></svg>
<div class="t" style="left:298.60px;top:210.33px;font-size:14.5px;color:#000;">Ім'я</div>
<div class="t" style="left:651.00px;top:210.33px;font-size:14.5px;color:#000;">Тип</div>
<div class="t" style="left:713.30px;top:210.33px;font-size:14.5px;color:#000;">Розмір</div>
<div class="t" style="left:777.00px;top:210.33px;font-size:14.5px;color:#000;">Дата</div>
<div class="a" style="left:891px;top:204px;width:50px;height:24px;overflow:hidden">
<div class="t" style="left:3.00px;top:6.33px;font-size:14.5px;color:#000;">Атрибути</div>
</div>
<div class="a" style="left:283px;top:229px;width:658px;height:21px;background:#cce8ff;border:2px solid #000"></div>
<svg style="left:285px;top:231.5px;" width="16" height="16" viewBox="0 0 16 16"><defs><linearGradient id="ug" x1="0" y1="0" x2="0" y2="1"><stop offset="0" stop-color="#e8e8e8"/><stop offset="1" stop-color="#404040"/></linearGradient></defs><path d="M7 1 L13 7 H10 V10 H15 V15 H6 V7 H1 Z" fill="url(#ug)" stroke="#555" stroke-width="0.8"/></svg>
<div class="t" style="left:303.00px;top:232.67px;font-size:14.8px;color:#000;">[..]</div>
<div class="t" style="right:1161.20px;top:232.93px;font-size:14.5px;color:#000;">&lt;дир.&gt;</div>
<svg style="left:285px;top:252.5px;" width="16" height="16" viewBox="0 0 16 16"><path d="M1 3 H6 L7.5 4.5 H15 V14 H1 Z" fill="#f5c342"/><rect x="1" y="6" width="14" height="8" fill="#fcd86a"/></svg>
<div class="t" style="left:303.00px;top:253.67px;font-size:14.8px;color:#000;">[hyperlinks]</div>
<div class="t" style="right:1161.20px;top:253.93px;font-size:14.5px;color:#000;">&lt;дир.&gt;</div>
<div class="t" style="left:775.10px;top:253.93px;font-size:14.5px;color:#000;transform:scaleX(0.9606);transform-origin:0 50%;">17.11.2025 21:50</div>
<div class="t" style="left:892.60px;top:253.93px;font-size:14.5px;color:#000;">-755</div>
<svg style="left:285px;top:273.5px;" width="16" height="16" viewBox="0 0 16 16"><defs><linearGradient id="pg1" x1="0" y1="0" x2="0" y2="1"><stop offset="0" stop-color="#1860c8"/><stop offset="1" stop-color="#1aa0f0"/></linearGradient></defs><rect x="2" y="0.5" width="12.5" height="15" fill="#f7f7f7"/><path d="M3 0.5 H10.5 L14 4 M10.5 0.5 V3.5" fill="none" stroke="#777" stroke-width="0.9"/><rect x="4.9" y="4.3" width="7.2" height="7.1" rx="1.2" fill="url(#pg1)"/><path d="M4.9 10.5 L8.6 6.5 L12.1 10.5 V11.4 H4.9 Z" fill="#40d8ff" opacity="0.85"/><rect x="9.8" y="5" width="1.6" height="0.9" fill="#e0f0ff"/></svg>
<div class="t" style="left:303.00px;top:274.67px;font-size:14.8px;color:#000;">Знімок екрана (25)</div>
<div class="t" style="left:646.60px;top:274.67px;font-size:14.8px;color:#000;">png</div>
<div class="t" style="right:1154.00px;top:274.93px;font-size:14.5px;color:#000;transform:scaleX(0.9750);transform-origin:100% 50%;">256 059</div>
<div class="t" style="left:775.10px;top:274.93px;font-size:14.5px;color:#000;transform:scaleX(0.9606);transform-origin:0 50%;">17.11.2025 22:03</div>
<div class="t" style="left:892.60px;top:274.93px;font-size:14.5px;color:#000;">-644</div>
<svg style="left:285px;top:294.5px;" width="16" height="16" viewBox="0 0 16 16"><defs><linearGradient id="eg2" x1="0" y1="0.9" x2="1" y2="0.2"><stop offset="0" stop-color="#0d5cb5"/><stop offset="0.45" stop-color="#1c9be0"/><stop offset="0.75" stop-color="#2cc3c8"/><stop offset="1" stop-color="#5ee05a"/></linearGradient></defs><circle cx="8" cy="8" r="8" fill="url(#eg2)"/><path d="M4.5 6 Q3.5 13 9 14 Q12.5 14.3 14.8 12.2 Q13 15.5 8.5 16.2 Q1 16 0 9 Q0.5 5 4.5 6 Z" fill="#0b4c9a" opacity="0.8"/><path d="M16.5 9.8 Q15.8 11.6 14.8 12.2 Q15 14 11.5 16.5 H16.5 Z" fill="#fff"/><path d="M10 11.2 Q14 11.8 16 9.5 V7 Q15 5 12 5.5 Q8.5 6 10 11.2 Z" fill="#4cd06a" opacity="0.6"/><ellipse cx="8.2" cy="8.8" rx="2.4" ry="2.1" fill="#fff"/></svg>
<div class="t" style="left:303.00px;top:295.67px;font-size:14.8px;color:#000;">student</div>
<div class="t" style="left:646.60px;top:295.67px;font-size:14.8px;color:#000;">html</div>
<div class="t" style="right:1154.00px;top:295.93px;font-size:14.5px;color:#000;transform:scaleX(0.9750);transform-origin:100% 50%;">869</div>
<div class="t" style="left:775.10px;top:295.93px;font-size:14.5px;color:#000;transform:scaleX(0.9606);transform-origin:0 50%;">17.11.2025 21:44</div>
<div class="t" style="left:892.60px;top:295.93px;font-size:14.5px;color:#000;">-644</div>
<svg style="left:285px;top:315.5px;" width="16" height="16" viewBox="0 0 16 16"><defs><linearGradient id="eg2" x1="0" y1="0.9" x2="1" y2="0.2"><stop offset="0" stop-color="#0d5cb5"/><stop offset="0.45" stop-color="#1c9be0"/><stop offset="0.75" stop-color="#2cc3c8"/><stop offset="1" stop-color="#5ee05a"/></linearGradient></defs><circle cx="8" cy="8" r="8" fill="url(#eg2)"/><path d="M4.5 6 Q3.5 13 9 14 Q12.5 14.3 14.8 12.2 Q13 15.5 8.5 16.2 Q1 16 0 9 Q0.5 5 4.5 6 Z" fill="#0b4c9a" opacity="0.8"/><path d="M16.5 9.8 Q15.8 11.6 14.8 12.2 Q15 14 11.5 16.5 H16.5 Z" fill="#fff"/><path d="M10 11.2 Q14 11.8 16 9.5 V7 Q15 5 12 5.5 Q8.5 6 10 11.2 Z" fill="#4cd06a" opacity="0.6"/><ellipse cx="8.2" cy="8.8" rx="2.4" ry="2.1" fill="#fff"/></svg>
<div class="t" style="left:303.00px;top:316.67px;font-size:14.8px;color:#000;">lab6</div>
<div class="t" style="left:646.60px;top:316.67px;font-size:14.8px;color:#000;">html</div>
<div class="t" style="right:1154.00px;top:316.93px;font-size:14.5px;color:#000;transform:scaleX(0.9750);transform-origin:100% 50%;">608</div>
<div class="t" style="left:775.10px;top:316.93px;font-size:14.5px;color:#000;transform:scaleX(0.9699);transform-origin:0 50%;">17.11.2025 22:11</div>
<div class="t" style="left:892.60px;top:316.93px;font-size:14.5px;color:#000;">-644</div>
<svg style="left:285px;top:336.5px;" width="16" height="16" viewBox="0 0 16 16"><defs><linearGradient id="eg2" x1="0" y1="0.9" x2="1" y2="0.2"><stop offset="0" stop-color="#0d5cb5"/><stop offset="0.45" stop-color="#1c9be0"/><stop offset="0.75" stop-color="#2cc3c8"/><stop offset="1" stop-color="#5ee05a"/></linearGradient></defs><circle cx="8" cy="8" r="8" fill="url(#eg2)"/><path d="M4.5 6 Q3.5 13 9 14 Q12.5 14.3 14.8 12.2 Q13 15.5 8.5 16.2 Q1 16 0 9 Q0.5 5 4.5 6 Z" fill="#0b4c9a" opacity="0.8"/><path d="M16.5 9.8 Q15.8 11.6 14.8 12.2 Q15 14 11.5 16.5 H16.5 Z" fill="#fff"/><path d="M10 11.2 Q14 11.8 16 9.5 V7 Q15 5 12 5.5 Q8.5 6 10 11.2 Z" fill="#4cd06a" opacity="0.6"/><ellipse cx="8.2" cy="8.8" rx="2.4" ry="2.1" fill="#fff"/></svg>
<div class="t" style="left:303.00px;top:337.67px;font-size:14.8px;color:#000;">history</div>
<div class="t" style="left:646.60px;top:337.67px;font-size:14.8px;color:#000;">html</div>
<div class="t" style="right:1154.00px;top:337.93px;font-size:14.5px;color:#000;transform:scaleX(0.9750);transform-origin:100% 50%;">5 435</div>
<div class="t" style="left:775.10px;top:337.93px;font-size:14.5px;color:#000;transform:scaleX(0.9606);transform-origin:0 50%;">17.11.2025 21:57</div>
<div class="t" style="left:892.60px;top:337.93px;font-size:14.5px;color:#000;">-644</div>
<svg style="left:285px;top:357.5px;" width="16" height="16" viewBox="0 0 16 16"><path d="M3 1 H10 L13 4 V15 H3 Z" fill="#fafafa" stroke="#b0b0b0" stroke-width="0.8"/><ellipse cx="8" cy="9" rx="3.5" ry="2.5" fill="#9b7cc8"/></svg>
<div class="t" style="left:303.00px;top:358.67px;font-size:14.8px;color:#000;">default</div>
<div class="t" style="left:646.60px;top:358.67px;font-size:14.8px;color:#000;">php</div>
<div class="t" style="right:1154.00px;top:358.93px;font-size:14.5px;color:#000;transform:scaleX(0.9750);transform-origin:100% 50%;">16 560</div>
<div class="t" style="left:775.10px;top:358.93px;font-size:14.5px;color:#000;transform:scaleX(0.9606);transform-origin:0 50%;">17.11.2025 18:21</div>
<div class="t" style="left:892.60px;top:358.93px;font-size:14.5px;color:#000;">-644</div>
<svg style="left:285px;top:378.5px;" width="16" height="16" viewBox="0 0 16 16"><defs><linearGradient id="pg1" x1="0" y1="0" x2="0" y2="1"><stop offset="0" stop-color="#1860c8"/><stop offset="1" stop-color="#1aa0f0"/></linearGradient></defs><rect x="2" y="0.5" width="12.5" height="15" fill="#f7f7f7"/><path d="M3 0.5 H10.5 L14 4 M10.5 0.5 V3.5" fill="none" stroke="#777" stroke-width="0.9"/><rect x="4.9" y="4.3" width="7.2" height="7.1" rx="1.2" fill="url(#pg1)"/><path d="M4.9 10.5 L8.6 6.5 L12.1 10.5 V11.4 H4.9 Z" fill="#40d8ff" opacity="0.85"/><rect x="9.8" y="5" width="1.6" height="0.9" fill="#e0f0ff"/></svg>
<div class="t" style="left:303.00px;top:379.67px;font-size:14.8px;color:#000;">888</div>
<div class="t" style="left:646.60px;top:379.67px;font-size:14.8px;color:#000;">png</div>
<div class="t" style="right:1154.00px;top:379.93px;font-size:14.5px;color:#000;transform:scaleX(0.9750);transform-origin:100% 50%;">292 445</div>
<div class="t" style="left:775.10px;top:379.93px;font-size:14.5px;color:#000;transform:scaleX(0.9606);transform-origin:0 50%;">17.11.2025 21:57</div>
<div class="t" style="left:892.60px;top:379.93px;font-size:14.5px;color:#000;">-644</div>
<svg style="left:285px;top:399.5px;" width="16" height="16" viewBox="0 0 16 16"><defs><linearGradient id="pg1" x1="0" y1="0" x2="0" y2="1"><stop offset="0" stop-color="#1860c8"/><stop offset="1" stop-color="#1aa0f0"/></linearGradient></defs><rect x="2" y="0.5" width="12.5" height="15" fill="#f7f7f7"/><path d="M3 0.5 H10.5 L14 4 M10.5 0.5 V3.5" fill="none" stroke="#777" stroke-width="0.9"/><rect x="4.9" y="4.3" width="7.2" height="7.1" rx="1.2" fill="url(#pg1)"/><path d="M4.9 10.5 L8.6 6.5 L12.1 10.5 V11.4 H4.9 Z" fill="#40d8ff" opacity="0.85"/><rect x="9.8" y="5" width="1.6" height="0.9" fill="#e0f0ff"/></svg>
<div class="t" style="left:303.00px;top:400.67px;font-size:14.8px;color:#000;">2</div>
<div class="t" style="left:646.60px;top:400.67px;font-size:14.8px;color:#000;">png</div>
<div class="t" style="right:1154.00px;top:400.93px;font-size:14.5px;color:#000;transform:scaleX(0.9750);transform-origin:100% 50%;">179 509</div>
<div class="t" style="left:775.10px;top:400.93px;font-size:14.5px;color:#000;transform:scaleX(0.9606);transform-origin:0 50%;">17.11.2025 22:05</div>
<div class="t" style="left:892.60px;top:400.93px;font-size:14.5px;color:#000;">-644</div>
<svg style="left:285px;top:420.5px;" width="16" height="16" viewBox="0 0 16 16"><defs><linearGradient id="pg1" x1="0" y1="0" x2="0" y2="1"><stop offset="0" stop-color="#1860c8"/><stop offset="1" stop-color="#1aa0f0"/></linearGradient></defs><rect x="2" y="0.5" width="12.5" height="15" fill="#f7f7f7"/><path d="M3 0.5 H10.5 L14 4 M10.5 0.5 V3.5" fill="none" stroke="#777" stroke-width="0.9"/><rect x="4.9" y="4.3" width="7.2" height="7.1" rx="1.2" fill="url(#pg1)"/><path d="M4.9 10.5 L8.6 6.5 L12.1 10.5 V11.4 H4.9 Z" fill="#40d8ff" opacity="0.85"/><rect x="9.8" y="5" width="1.6" height="0.9" fill="#e0f0ff"/></svg>
<div class="t" style="left:303.00px;top:421.67px;font-size:14.8px;color:#000;">123</div>
<div class="t" style="left:646.60px;top:421.67px;font-size:14.8px;color:#000;">png</div>
<div class="t" style="right:1154.00px;top:421.93px;font-size:14.5px;color:#000;transform:scaleX(0.9750);transform-origin:100% 50%;">171 235</div>
<div class="t" style="left:775.10px;top:421.93px;font-size:14.5px;color:#000;transform:scaleX(0.9606);transform-origin:0 50%;">17.11.2025 21:54</div>
<div class="t" style="left:892.60px;top:421.93px;font-size:14.5px;color:#000;">-644</div>
<svg style="left:285px;top:441.5px;" width="16" height="16" viewBox="0 0 16 16"><defs><linearGradient id="pg1" x1="0" y1="0" x2="0" y2="1"><stop offset="0" stop-color="#1860c8"/><stop offset="1" stop-color="#1aa0f0"/></linearGradient></defs><rect x="2" y="0.5" width="12.5" height="15" fill="#f7f7f7"/><path d="M3 0.5 H10.5 L14 4 M10.5 0.5 V3.5" fill="none" stroke="#777" stroke-width="0.9"/><rect x="4.9" y="4.3" width="7.2" height="7.1" rx="1.2" fill="url(#pg1)"/><path d="M4.9 10.5 L8.6 6.5 L12.1 10.5 V11.4 H4.9 Z" fill="#40d8ff" opacity="0.85"/><rect x="9.8" y="5" width="1.6" height="0.9" fill="#e0f0ff"/></svg>
<div class="t" style="left:303.00px;top:442.67px;font-size:14.8px;color:#000;">1</div>
<div class="t" style="left:646.60px;top:442.67px;font-size:14.8px;color:#000;">png</div>
<div class="t" style="right:1154.00px;top:442.93px;font-size:14.5px;color:#000;transform:scaleX(0.9750);transform-origin:100% 50%;">127 841</div>
<div class="t" style="left:775.10px;top:442.93px;font-size:14.5px;color:#000;transform:scaleX(0.9606);transform-origin:0 50%;">17.11.2025 22:05</div>
<div class="t" style="left:892.60px;top:442.93px;font-size:14.5px;color:#000;">-644</div>
<div class="a" style="left:978px;top:152.5px;width:63px;height:26px;background:#ffffff;border:1px solid #b0b0b0;border-radius:3px"></div>
<svg style="left:981px;top:154px;" width="20" height="20" viewBox="0 0 20 20"><rect x="1" y="1" width="3.5" height="3.5" fill="#0a78d8"/><rect x="5.5" y="1" width="3.5" height="3.5" fill="#0a78d8"/><rect x="1" y="5.5" width="3.5" height="3.5" fill="#0a78d8"/><rect x="5.5" y="5.5" width="3.5" height="3.5" fill="#0a78d8"/><path d="M3 10 H17 L19 12 V17 H3 Z" fill="#c8c8c8"/><rect x="3" y="12" width="16" height="5" fill="#3a3a3a"/><circle cx="5.5" cy="14.5" r="0.8" fill="#30e030"/></svg>
<div class="t" style="left:1006.00px;top:158.55px;font-size:15px;color:#000;">c</div>
<svg style="left:1026px;top:163px;" width="10" height="6" viewBox="0 0 10 6"><path d="M0.5 0.5 L5 5 L9.5 0.5" fill="none" stroke="#444" stroke-width="0.9"/></svg>
<div class="t" style="left:1046.00px;top:158.30px;font-size:15px;color:#000;transform:scaleX(0.9807);transform-origin:0 50%;">[os]  62 948 332 кБ із 498 411 844 кБ вільно</div>
<div class="a" style="left:1584.4px;top:153px;width:1px;height:24px;background:#a0a0a0;"></div>
<div class="t" style="left:1595.90px;top:159.80px;font-size:15px;color:#000;">\</div>
<div class="t" style="left:1620.40px;top:158.10px;font-size:15px;color:#000;">..</div>
<svg style="left:1594.4px;top:187.5px;" width="8" height="8" viewBox="0 0 8 8"><path d="M4 0.3 V7.7 M0.8 2.1 L7.2 5.9 M7.2 2.1 L0.8 5.9" stroke="#000" stroke-width="1.1"/><circle cx="4" cy="4" r="1.3" fill="#f0f0f0" stroke="#000" stroke-width="0.8"/></svg>
<svg style="left:1618.9px;top:188.9px;" width="10" height="6" viewBox="0 0 10 6"><path d="M0 0 H9.5 L4.75 5.5 Z" fill="#000"/></svg>
<div class="a" style="left:978px;top:181.5px;width:608px;height:21.5px;background:#bfcddb;"></div>
<svg style="left:980.3px;top:191.6px;" width="14" height="8" viewBox="0 0 14 8"><path d="M0 0 H13.3 L6.65 7 Z" fill="#000"/></svg>
<div class="t" style="left:997.40px;top:185.10px;font-size:15px;color:#000;transform:scaleX(0.9364);transform-origin:0 50%;">c:\OPI_Savchuk\lab6_Savchuk\*.*</div>
<div class="a" style="left:978px;top:203px;width:659px;height:701px;background:#ffffff;border:1px solid #a0a0a0;border-top:2px solid #a8a8a8;border-bottom:0"></div>
<div class="a" style="left:979px;top:205px;width:364px;height:23px;background:#bcdcf4;"></div>
<div class="a" style="left:1343px;top:205px;width:1px;height:23px;background:#e0e0e0;"></div>
<div class="a" style="left:1405px;top:205px;width:1px;height:23px;background:#e0e0e0;"></div>
<div class="a" style="left:1469px;top:205px;width:1px;height:23px;background:#e0e0e0;"></div>
<div class="a" style="left:1587px;top:205px;width:1px;height:23px;background:#e0e0e0;"></div>
<svg style="left:981px;top:213px;" width="12" height="13" viewBox="0 0 12 13"><path d="M4.5 12.5 H7.5 V5.5 H11.5 L6 0 L0.5 5.5 H4.5 Z" fill="#000"/></svg>
<div class="t" style="left:994.00px;top:210.33px;font-size:14.5px;color:#000;">Ім'я</div>
<div class="t" style="left:1347.30px;top:210.33px;font-size:14.5px;color:#000;">Тип</div>
<div class="t" style="left:1408.80px;top:210.33px;font-size:14.5px;color:#000;">Розмір</div>
<div class="t" style="left:1472.70px;top:210.33px;font-size:14.5px;color:#000;">Дата</div>
<div class="a" style="left:1588px;top:204px;width:48px;height:24px;overflow:hidden">
<div class="t" style="left:2.90px;top:6.33px;font-size:14.5px;color:#000;">Атрибути</div>
</div>
<svg style="left:979px;top:231.5px;" width="16" height="16" viewBox="0 0 16 16"><defs><linearGradient id="ug" x1="0" y1="0" x2="0" y2="1"><stop offset="0" stop-color="#e8e8e8"/><stop offset="1" stop-color="#404040"/></linearGradient></defs><path d="M7 1 L13 7 H10 V10 H15 V15 H6 V7 H1 Z" fill="url(#ug)" stroke="#555" stroke-width="0.8"/></svg>
<div class="t" style="left:997.00px;top:232.67px;font-size:14.8px;color:#000;">[..]</div>
<div class="t" style="right:466.50px;top:232.93px;font-size:14.5px;color:#000;">&lt;дир.&gt;</div>
<div class="t" style="left:1471.30px;top:232.93px;font-size:14.5px;color:#000;transform:scaleX(0.9606);transform-origin:0 50%;">17.11.2025 14:32</div>
<div class="t" style="left:1588.80px;top:232.93px;font-size:14.5px;color:#000;transform:scaleX(1.1648);transform-origin:0 50%;">----</div>
<svg style="left:979px;top:252.5px;" width="16" height="16" viewBox="0 0 16 16"><path d="M1 3 H6 L7.5 4.5 H15 V14 H1 Z" fill="#f5c342"/><rect x="1" y="6" width="14" height="8" fill="#fcd86a"/></svg>
<div class="t" style="left:997.00px;top:253.67px;font-size:14.8px;color:#000;">[hyperlinks]</div>
<div class="t" style="right:466.50px;top:253.93px;font-size:14.5px;color:#000;">&lt;дир.&gt;</div>
<div class="t" style="left:1471.30px;top:253.93px;font-size:14.5px;color:#000;transform:scaleX(0.9606);transform-origin:0 50%;">17.11.2025 15:17</div>
<div class="t" style="left:1588.80px;top:253.93px;font-size:14.5px;color:#000;transform:scaleX(1.1648);transform-origin:0 50%;">----</div>
<svg style="left:979px;top:273.5px;" width="16" height="16" viewBox="0 0 16 16"><path d="M3 1 H10 L13 4 V15 H3 Z" fill="#fafafa" stroke="#b0b0b0" stroke-width="0.8"/><text x="8" y="12" font-size="7" font-family="Liberation Sans" fill="#c8c060" text-anchor="middle">{}</text></svg>
<div class="t" style="left:997.00px;top:274.67px;font-size:14.8px;color:#000;">ftp-simple-temp</div>
<div class="t" style="left:1342.00px;top:274.67px;font-size:14.8px;color:#000;">json</div>
<div class="t" style="right:459.30px;top:274.93px;font-size:14.5px;color:#000;transform:scaleX(0.9750);transform-origin:100% 50%;">243</div>
<div class="t" style="left:1471.30px;top:274.93px;font-size:14.5px;color:#000;transform:scaleX(0.9606);transform-origin:0 50%;">17.11.2025 21:18</div>
<div class="t" style="left:1588.80px;top:274.93px;font-size:14.5px;color:#000;">-a--</div>
<svg style="left:979px;top:294.5px;" width="16" height="16" viewBox="0 0 16 16"><defs><linearGradient id="eg2" x1="0" y1="0.9" x2="1" y2="0.2"><stop offset="0" stop-color="#0d5cb5"/><stop offset="0.45" stop-color="#1c9be0"/><stop offset="0.75" stop-color="#2cc3c8"/><stop offset="1" stop-color="#5ee05a"/></linearGradient></defs><circle cx="8" cy="8" r="8" fill="url(#eg2)"/><path d="M4.5 6 Q3.5 13 9 14 Q12.5 14.3 14.8 12.2 Q13 15.5 8.5 16.2 Q1 16 0 9 Q0.5 5 4.5 6 Z" fill="#0b4c9a" opacity="0.8"/><path d="M16.5 9.8 Q15.8 11.6 14.8 12.2 Q15 14 11.5 16.5 H16.5 Z" fill="#fff"/><path d="M10 11.2 Q14 11.8 16 9.5 V7 Q15 5 12 5.5 Q8.5 6 10 11.2 Z" fill="#4cd06a" opacity="0.6"/><ellipse cx="8.2" cy="8.8" rx="2.4" ry="2.1" fill="#fff"/></svg>
<div class="t" style="left:997.00px;top:295.67px;font-size:14.8px;color:#000;">lab6</div>
<div class="t" style="left:1342.00px;top:295.67px;font-size:14.8px;color:#000;">html</div>
<div class="t" style="right:459.30px;top:295.93px;font-size:14.5px;color:#000;transform:scaleX(0.9750);transform-origin:100% 50%;">418</div>
<div class="t" style="left:1471.30px;top:295.93px;font-size:14.5px;color:#000;transform:scaleX(0.9606);transform-origin:0 50%;">17.11.2025 15:19</div>
<div class="t" style="left:1588.80px;top:295.93px;font-size:14.5px;color:#000;">-a--</div>
<svg style="left:979px;top:315.5px;" width="16" height="16" viewBox="0 0 16 16"><defs><linearGradient id="eg2" x1="0" y1="0.9" x2="1" y2="0.2"><stop offset="0" stop-color="#0d5cb5"/><stop offset="0.45" stop-color="#1c9be0"/><stop offset="0.75" stop-color="#2cc3c8"/><stop offset="1" stop-color="#5ee05a"/></linearGradient></defs><circle cx="8" cy="8" r="8" fill="url(#eg2)"/><path d="M4.5 6 Q3.5 13 9 14 Q12.5 14.3 14.8 12.2 Q13 15.5 8.5 16.2 Q1 16 0 9 Q0.5 5 4.5 6 Z" fill="#0b4c9a" opacity="0.8"/><path d="M16.5 9.8 Q15.8 11.6 14.8 12.2 Q15 14 11.5 16.5 H16.5 Z" fill="#fff"/><path d="M10 11.2 Q14 11.8 16 9.5 V7 Q15 5 12 5.5 Q8.5 6 10 11.2 Z" fill="#4cd06a" opacity="0.6"/><ellipse cx="8.2" cy="8.8" rx="2.4" ry="2.1" fill="#fff"/></svg>
<div class="t" style="left:997.00px;top:316.67px;font-size:14.8px;color:#000;">student</div>
<div class="t" style="left:1342.00px;top:316.67px;font-size:14.8px;color:#000;">html</div>
<div class="t" style="right:459.30px;top:316.93px;font-size:14.5px;color:#000;transform:scaleX(0.9750);transform-origin:100% 50%;">869</div>
<div class="t" style="left:1471.30px;top:316.93px;font-size:14.5px;color:#000;transform:scaleX(0.9606);transform-origin:0 50%;">17.11.2025 19:06</div>
<div class="t" style="left:1588.80px;top:316.93px;font-size:14.5px;color:#000;">-a--</div>
<svg style="left:951px;top:221.8px;" width="16" height="17" viewBox="0 0 16 17"><path d="M4 1 H11 L14 4 V14 H4 Z" fill="#e8ecff" stroke="#6070d0" stroke-width="0.8"/><circle cx="9" cy="8" r="3.5" fill="#c8dcf0" stroke="#6080a0" stroke-width="1.2"/><path d="M6.5 10.5 L1.5 15.5" stroke="#b06030" stroke-width="2.4" stroke-linecap="round"/></svg>
<svg style="left:951px;top:253px;" width="17" height="17" viewBox="0 0 17 17"><path d="M2 1 H9 L12 4 V15 H2 Z" fill="#f0f2ff" stroke="#6070d0" stroke-width="0.8"/><path d="M6 8 L14 15" stroke="#d02020" stroke-width="2.4"/><path d="M5 7 L7 9" stroke="#f0c080" stroke-width="2"/></svg>
<svg style="left:951px;top:285px;" width="16" height="17" viewBox="0 0 16 17"><path d="M6 1 H12 L15 4 V11 H6 Z" fill="#f0f2ff" stroke="#6070d0" stroke-width="0.8"/><path d="M1 6 H7 L10 9 V16 H1 Z" fill="#f0f2ff" stroke="#6070d0" stroke-width="0.8"/></svg>
<svg style="left:951px;top:318px;" width="16" height="17" viewBox="0 0 16 17"><path d="M6 1 H12 L15 4 V11 H6 Z" fill="#f0f2ff" stroke="#6070d0" stroke-width="0.8"/><path d="M1 6 H7 L10 9 V16 H1 Z" fill="#fff4f4" stroke="#e06060" stroke-width="0.8" stroke-dasharray="1 1"/></svg>
<svg style="left:951px;top:381px;" width="17" height="18" viewBox="0 0 17 18"><path d="M2 6 L4 4 H16 L14 6 Z" fill="#c89a30"/><path d="M2 6 H14 V17 H2 Z" fill="#f7e3a0" stroke="#b07a10" stroke-width="0.9"/><path d="M2 11.5 H14 M8 6 V17" stroke="#b07a10" stroke-width="0.9"/><path d="M14 6 L16 4 V15 L14 17 Z" fill="#d0a030" stroke="#b07a10" stroke-width="0.6"/><path d="M4.5 4 L8.5 0.5 L12.5 4 L8.5 6 Z" fill="#e04050"/></svg>
<svg style="left:951px;top:414px;" width="17" height="17" viewBox="0 0 17 17"><path d="M0.5 4 H5 L6.5 5.5 H14 V15 H0.5 Z" fill="#f5d870" stroke="#a08020" stroke-width="0.7"/><circle cx="12.5" cy="4" r="3.6" fill="#2050c0"/><path d="M12.5 1.8 V6.2 M10.3 4 H14.7" stroke="#fff" stroke-width="1.4"/></svg>
<div class="a" style="left:282px;top:904px;width:659px;height:25px;background:#f0f0f0;border:1px solid #a0a0a0;border-top:1px solid #dcdcdc"></div>
<div class="t" style="left:285.40px;top:908.30px;font-size:15px;color:#000;transform:scaleX(0.9766);transform-origin:0 50%;">0 кБ / 1 025 кБ, 0 / 9 файл(ів), 0 / 1 дир.</div>
<div class="a" style="left:978px;top:904px;width:659px;height:25px;background:#f0f0f0;border:1px solid #a0a0a0;border-top:1px solid #dcdcdc"></div>
<div class="t" style="left:980.80px;top:908.30px;font-size:15px;color:#000;transform:scaleX(0.9824);transform-origin:0 50%;">0 кБ / 1 кБ, 0 / 3 файл(ів), 0 / 1 дир.</div>
<div class="t" style="left:458.00px;top:938.50px;font-size:15px;color:#000;transform:scaleX(1.0084);transform-origin:0 50%;">0:/domains/savchuk.online/public_html/&gt;</div>
<div class="a" style="left:735.5px;top:933.5px;width:901px;height:27px;background:#ffffff;border:1px solid #a0a0a0;border-top:1.5px solid #8a8a8a;border-radius:3px"></div>
<svg style="left:1620px;top:943px;" width="12" height="8" viewBox="0 0 12 8"><path d="M1 1 L6 6 L11 1" fill="none" stroke="#555" stroke-width="1"/></svg>
<div class="a" style="left:473.8px;top:966px;width:1px;height:23px;background:#b0b0b0;"></div>
<div class="a" style="left:666.2px;top:966px;width:1px;height:23px;background:#b0b0b0;"></div>
<div class="a" style="left:859.3px;top:966px;width:1px;height:23px;background:#b0b0b0;"></div>
<div class="a" style="left:1052.4px;top:966px;width:1px;height:23px;background:#b0b0b0;"></div>
<div class="a" style="left:1246px;top:966px;width:1px;height:23px;background:#b0b0b0;"></div>
<div class="a" style="left:1439px;top:966px;width:1px;height:23px;background:#b0b0b0;"></div>
<div class="t" style="left:334.75px;top:970.83px;font-size:14.5px;color:#000;transform:scaleX(0.9846);transform-origin:50% 50%;">F3 Перегляд</div>
<div class="t" style="left:521.59px;top:970.83px;font-size:14.5px;color:#000;transform:scaleX(0.9846);transform-origin:50% 50%;">F4 Редагувати</div>
<div class="t" style="left:713.31px;top:970.83px;font-size:14.5px;color:#000;transform:scaleX(0.9846);transform-origin:50% 50%;">F5 Копіювання</div>
<div class="t" style="left:899.62px;top:970.83px;font-size:14.5px;color:#000;transform:scaleX(0.9846);transform-origin:50% 50%;">F6 Переміщення</div>
<div class="t" style="left:1105.01px;top:970.83px;font-size:14.5px;color:#000;transform:scaleX(0.9846);transform-origin:50% 50%;">F7 Нова тека</div>
<div class="t" style="left:1294.68px;top:970.83px;font-size:14.5px;color:#000;transform:scaleX(0.9846);transform-origin:50% 50%;">F8 Видалення</div>
<div class="t" style="left:1496.48px;top:970.83px;font-size:14.5px;color:#000;transform:scaleX(0.9846);transform-origin:50% 50%;">Alt+F4 Вихід</div>
</body></html>
